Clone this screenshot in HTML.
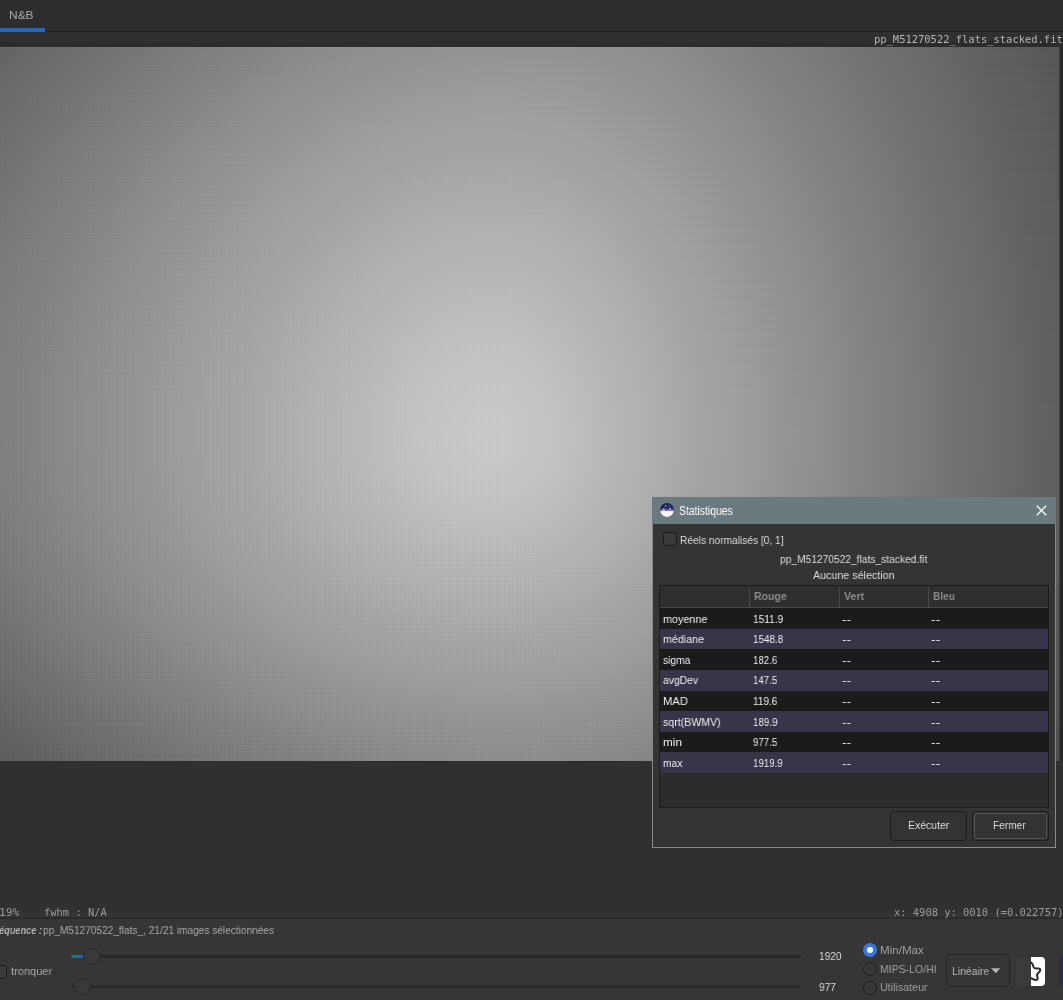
<!DOCTYPE html>
<html lang="fr">
<head>
<meta charset="utf-8">
<title>Statistiques</title>
<style>
*{box-sizing:border-box;margin:0;padding:0}
html,body{width:1063px;height:1000px;overflow:hidden;background:#2e2e2e}
body{position:relative;font-family:"Liberation Sans",sans-serif;font-size:12px;color:#d0d0d0}
.abs{position:absolute}
.t{position:absolute;white-space:nowrap;line-height:1;will-change:transform}
.mono{font-family:"DejaVu Sans Mono","Liberation Mono",monospace}
#topbar{left:0;top:0;width:1063px;height:31px;background:#2d2d2d}
#tabline{left:0;top:31px;width:1063px;height:1px;background:#1f1f1f}
#tabsel{left:0;top:28px;width:45px;height:4px;background:#2566b8}
#band{left:0;top:32px;width:1063px;height:15px;background:linear-gradient(#303030 9px,#2c2c2c 11px)}
#img{left:0;top:47px;width:1063px;height:714px;background:#999;overflow:hidden}
.s{position:absolute;left:0;width:1063px}
#imgT{left:0;top:47px;width:1060px;height:714px;background:repeating-linear-gradient(90deg,rgba(0,0,0,.014) 0 1px,rgba(255,255,255,.014) 1px 2px),repeating-linear-gradient(0deg,rgba(0,0,0,.014) 0 1px,rgba(255,255,255,.014) 1px 2px)}
#imgR{left:1059px;top:47px;width:4px;height:714px;background:linear-gradient(90deg,rgba(38,38,38,.3),#282828 1.5px,#242424 4px)}
#below{left:0;top:761px;width:1063px;height:158px;background:linear-gradient(#303030 151px,#353535 153px,#353535 156px,#2a2a2a 157px)}
#sepline{left:0;top:918px;width:1063px;height:1px;background:#282828}
#bottom{left:0;top:919px;width:1063px;height:81px;background:#363636}
#dlg{left:652px;top:497px;width:404px;height:351px;background:#343434;border:1px solid #8a8a8a;border-top:none}
#dlgtitle{left:-1px;top:0;width:404px;height:27px;background:#6b7a7f}
.cb{position:absolute;width:14px;height:14px;border:1px solid #1b1b1b;border-radius:3px;background:#3a3a3a}
#tbl{left:6px;top:88px;width:390px;height:223px;background:#2c2c2c;border:1px solid #1c1c1c}
#thead{left:0;top:0;width:388px;height:22px;background:#2f2f2f;border-bottom:1px solid #4a4a4a}
.vs{position:absolute;top:1px;width:1px;height:20px;background:#4a4a4a}
.row{position:absolute;left:0;width:388px}
.btn{position:absolute;height:30px;border:1px solid #1c1c1c;border-radius:4px;background:#333}
.track{position:absolute;height:3px;background:#292929;border-radius:2px}
.knob{position:absolute;width:17px;height:17px;border-radius:50%;background:#393939;border:1px solid #272727}
.radio{position:absolute;width:14px;height:14px;border-radius:50%;background:#383838;border:1px solid #1e1e1e}
</style>
</head>
<body>
<div id="topbar" class="abs"></div>
<div id="tabline" class="abs"></div>
<div id="tabsel" class="abs"></div>
<div id="band" class="abs"></div>
<div id="img" class="abs">
<div class="s" style="top:0px;height:7px;background:linear-gradient(90deg,#636363 0px,#676767 28px,#6b6b6b 56px,#6f6f6f 84px,#737373 112px,#767676 140px,#7a7a7a 168px,#7d7d7d 196px,#818181 224px,#848484 252px,#878787 280px,#8a8a8a 308px,#8c8c8c 336px,#8e8e8e 364px,#909090 392px,#929292 420px,#939393 448px,#949494 476px,#949494 504px,#949494 532px,#939393 560px,#929292 588px,#909090 616px,#8e8e8e 644px,#8b8b8b 672px,#888888 700px,#858585 728px,#818181 756px,#7d7d7d 784px,#7a7a7a 812px,#767676 840px,#727272 868px,#6d6d6d 896px,#696969 924px,#656565 952px,#616161 980px,#5c5c5c 1008px,#585858 1036px,#535353 1063px)"></div>
<div class="s" style="top:7px;height:7px;background:linear-gradient(90deg,#646464 0px,#686868 28px,#6c6c6c 56px,#707070 84px,#747474 112px,#777777 140px,#7b7b7b 168px,#7f7f7f 196px,#828282 224px,#858585 252px,#888888 280px,#8b8b8b 308px,#8d8d8d 336px,#909090 364px,#929292 392px,#939393 420px,#949494 448px,#959595 476px,#959595 504px,#959595 532px,#949494 560px,#939393 588px,#919191 616px,#8f8f8f 644px,#8c8c8c 672px,#898989 700px,#868686 728px,#828282 756px,#7e7e7e 784px,#7a7a7a 812px,#767676 840px,#727272 868px,#6e6e6e 896px,#6a6a6a 924px,#656565 952px,#616161 980px,#5d5d5d 1008px,#585858 1036px,#545454 1063px)"></div>
<div class="s" style="top:14px;height:7px;background:linear-gradient(90deg,#656565 0px,#696969 28px,#6d6d6d 56px,#717171 84px,#757575 112px,#787878 140px,#7c7c7c 168px,#808080 196px,#838383 224px,#868686 252px,#898989 280px,#8c8c8c 308px,#8f8f8f 336px,#919191 364px,#939393 392px,#949494 420px,#969696 448px,#969696 476px,#979797 504px,#969696 532px,#959595 560px,#949494 588px,#929292 616px,#909090 644px,#8d8d8d 672px,#8a8a8a 700px,#868686 728px,#838383 756px,#7f7f7f 784px,#7b7b7b 812px,#777777 840px,#737373 868px,#6f6f6f 896px,#6a6a6a 924px,#666666 952px,#616161 980px,#5d5d5d 1008px,#585858 1036px,#545454 1063px)"></div>
<div class="s" style="top:21px;height:7px;background:linear-gradient(90deg,#666666 0px,#6a6a6a 28px,#6e6e6e 56px,#727272 84px,#767676 112px,#797979 140px,#7d7d7d 168px,#818181 196px,#848484 224px,#878787 252px,#8a8a8a 280px,#8d8d8d 308px,#909090 336px,#929292 364px,#949494 392px,#969696 420px,#979797 448px,#989898 476px,#989898 504px,#989898 532px,#979797 560px,#959595 588px,#939393 616px,#919191 644px,#8e8e8e 672px,#8b8b8b 700px,#878787 728px,#848484 756px,#808080 784px,#7c7c7c 812px,#787878 840px,#737373 868px,#6f6f6f 896px,#6b6b6b 924px,#666666 952px,#626262 980px,#5d5d5d 1008px,#595959 1036px,#545454 1063px)"></div>
<div class="s" style="top:28px;height:7px;background:linear-gradient(90deg,#676767 0px,#6b6b6b 28px,#6f6f6f 56px,#737373 84px,#777777 112px,#7a7a7a 140px,#7e7e7e 168px,#828282 196px,#858585 224px,#898989 252px,#8c8c8c 280px,#8e8e8e 308px,#919191 336px,#939393 364px,#959595 392px,#979797 420px,#989898 448px,#999999 476px,#999999 504px,#999999 532px,#989898 560px,#969696 588px,#949494 616px,#929292 644px,#8f8f8f 672px,#8c8c8c 700px,#888888 728px,#848484 756px,#808080 784px,#7c7c7c 812px,#787878 840px,#747474 868px,#707070 896px,#6b6b6b 924px,#676767 952px,#626262 980px,#5e5e5e 1008px,#595959 1036px,#555555 1063px)"></div>
<div class="s" style="top:35px;height:7px;background:linear-gradient(90deg,#686868 0px,#6c6c6c 28px,#707070 56px,#747474 84px,#787878 112px,#7b7b7b 140px,#7f7f7f 168px,#838383 196px,#868686 224px,#8a8a8a 252px,#8d8d8d 280px,#909090 308px,#929292 336px,#959595 364px,#969696 392px,#989898 420px,#999999 448px,#9a9a9a 476px,#9a9a9a 504px,#9a9a9a 532px,#999999 560px,#979797 588px,#959595 616px,#939393 644px,#909090 672px,#8c8c8c 700px,#898989 728px,#858585 756px,#818181 784px,#7d7d7d 812px,#797979 840px,#757575 868px,#707070 896px,#6c6c6c 924px,#676767 952px,#636363 980px,#5e5e5e 1008px,#5a5a5a 1036px,#555555 1063px)"></div>
<div class="s" style="top:42px;height:7px;background:linear-gradient(90deg,#696969 0px,#6d6d6d 28px,#717171 56px,#757575 84px,#797979 112px,#7c7c7c 140px,#808080 168px,#848484 196px,#878787 224px,#8b8b8b 252px,#8e8e8e 280px,#919191 308px,#939393 336px,#969696 364px,#989898 392px,#999999 420px,#9b9b9b 448px,#9b9b9b 476px,#9c9c9c 504px,#9b9b9b 532px,#9a9a9a 560px,#999999 588px,#969696 616px,#949494 644px,#919191 672px,#8d8d8d 700px,#8a8a8a 728px,#868686 756px,#828282 784px,#7e7e7e 812px,#797979 840px,#757575 868px,#717171 896px,#6c6c6c 924px,#686868 952px,#636363 980px,#5e5e5e 1008px,#5a5a5a 1036px,#555555 1063px)"></div>
<div class="s" style="top:49px;height:7px;background:linear-gradient(90deg,#696969 0px,#6e6e6e 28px,#727272 56px,#767676 84px,#7a7a7a 112px,#7d7d7d 140px,#818181 168px,#858585 196px,#888888 224px,#8c8c8c 252px,#8f8f8f 280px,#929292 308px,#959595 336px,#979797 364px,#999999 392px,#9b9b9b 420px,#9c9c9c 448px,#9d9d9d 476px,#9d9d9d 504px,#9c9c9c 532px,#9b9b9b 560px,#9a9a9a 588px,#979797 616px,#959595 644px,#929292 672px,#8e8e8e 700px,#8b8b8b 728px,#878787 756px,#838383 784px,#7e7e7e 812px,#7a7a7a 840px,#767676 868px,#717171 896px,#6d6d6d 924px,#686868 952px,#636363 980px,#5f5f5f 1008px,#5a5a5a 1036px,#565656 1063px)"></div>
<div class="s" style="top:56px;height:7px;background:linear-gradient(90deg,#6a6a6a 0px,#6e6e6e 28px,#737373 56px,#777777 84px,#7b7b7b 112px,#7e7e7e 140px,#828282 168px,#868686 196px,#898989 224px,#8d8d8d 252px,#909090 280px,#939393 308px,#969696 336px,#989898 364px,#9a9a9a 392px,#9c9c9c 420px,#9d9d9d 448px,#9e9e9e 476px,#9e9e9e 504px,#9d9d9d 532px,#9c9c9c 560px,#9b9b9b 588px,#989898 616px,#969696 644px,#939393 672px,#8f8f8f 700px,#8b8b8b 728px,#878787 756px,#838383 784px,#7f7f7f 812px,#7b7b7b 840px,#767676 868px,#727272 896px,#6d6d6d 924px,#696969 952px,#646464 980px,#5f5f5f 1008px,#5b5b5b 1036px,#565656 1063px)"></div>
<div class="s" style="top:63px;height:7px;background:linear-gradient(90deg,#6b6b6b 0px,#6f6f6f 28px,#737373 56px,#777777 84px,#7b7b7b 112px,#7f7f7f 140px,#838383 168px,#878787 196px,#8a8a8a 224px,#8e8e8e 252px,#919191 280px,#949494 308px,#979797 336px,#999999 364px,#9b9b9b 392px,#9d9d9d 420px,#9e9e9e 448px,#9f9f9f 476px,#9f9f9f 504px,#9f9f9f 532px,#9e9e9e 560px,#9c9c9c 588px,#999999 616px,#979797 644px,#939393 672px,#909090 700px,#8c8c8c 728px,#888888 756px,#848484 784px,#808080 812px,#7b7b7b 840px,#777777 868px,#727272 896px,#6e6e6e 924px,#696969 952px,#646464 980px,#606060 1008px,#5b5b5b 1036px,#565656 1063px)"></div>
<div class="s" style="top:70px;height:7px;background:linear-gradient(90deg,#6c6c6c 0px,#707070 28px,#747474 56px,#787878 84px,#7c7c7c 112px,#808080 140px,#848484 168px,#888888 196px,#8b8b8b 224px,#8f8f8f 252px,#929292 280px,#959595 308px,#989898 336px,#9a9a9a 364px,#9c9c9c 392px,#9e9e9e 420px,#9f9f9f 448px,#a0a0a0 476px,#a0a0a0 504px,#a0a0a0 532px,#9f9f9f 560px,#9d9d9d 588px,#9a9a9a 616px,#989898 644px,#949494 672px,#919191 700px,#8d8d8d 728px,#898989 756px,#858585 784px,#808080 812px,#7c7c7c 840px,#777777 868px,#737373 896px,#6e6e6e 924px,#696969 952px,#656565 980px,#606060 1008px,#5b5b5b 1036px,#575757 1063px)"></div>
<div class="s" style="top:77px;height:7px;background:linear-gradient(90deg,#6d6d6d 0px,#717171 28px,#757575 56px,#797979 84px,#7d7d7d 112px,#818181 140px,#858585 168px,#898989 196px,#8c8c8c 224px,#909090 252px,#939393 280px,#969696 308px,#999999 336px,#9c9c9c 364px,#9e9e9e 392px,#9f9f9f 420px,#a1a1a1 448px,#a1a1a1 476px,#a2a2a2 504px,#a1a1a1 532px,#a0a0a0 560px,#9e9e9e 588px,#9b9b9b 616px,#999999 644px,#959595 672px,#929292 700px,#8e8e8e 728px,#8a8a8a 756px,#858585 784px,#818181 812px,#7c7c7c 840px,#787878 868px,#737373 896px,#6f6f6f 924px,#6a6a6a 952px,#656565 980px,#606060 1008px,#5b5b5b 1036px,#575757 1063px)"></div>
<div class="s" style="top:84px;height:7px;background:linear-gradient(90deg,#6e6e6e 0px,#727272 28px,#767676 56px,#7a7a7a 84px,#7e7e7e 112px,#828282 140px,#868686 168px,#8a8a8a 196px,#8d8d8d 224px,#919191 252px,#949494 280px,#979797 308px,#9a9a9a 336px,#9d9d9d 364px,#9f9f9f 392px,#a1a1a1 420px,#a2a2a2 448px,#a3a3a3 476px,#a3a3a3 504px,#a2a2a2 532px,#a1a1a1 560px,#9f9f9f 588px,#9c9c9c 616px,#999999 644px,#969696 672px,#929292 700px,#8e8e8e 728px,#8a8a8a 756px,#868686 784px,#828282 812px,#7d7d7d 840px,#787878 868px,#747474 896px,#6f6f6f 924px,#6a6a6a 952px,#656565 980px,#616161 1008px,#5c5c5c 1036px,#575757 1063px)"></div>
<div class="s" style="top:91px;height:7px;background:linear-gradient(90deg,#6e6e6e 0px,#737373 28px,#777777 56px,#7b7b7b 84px,#7f7f7f 112px,#838383 140px,#878787 168px,#8b8b8b 196px,#8e8e8e 224px,#929292 252px,#959595 280px,#989898 308px,#9b9b9b 336px,#9e9e9e 364px,#a0a0a0 392px,#a2a2a2 420px,#a3a3a3 448px,#a4a4a4 476px,#a4a4a4 504px,#a3a3a3 532px,#a2a2a2 560px,#a0a0a0 588px,#9d9d9d 616px,#9a9a9a 644px,#979797 672px,#939393 700px,#8f8f8f 728px,#8b8b8b 756px,#878787 784px,#828282 812px,#7e7e7e 840px,#797979 868px,#747474 896px,#6f6f6f 924px,#6b6b6b 952px,#666666 980px,#616161 1008px,#5c5c5c 1036px,#575757 1063px)"></div>
<div class="s" style="top:98px;height:7px;background:linear-gradient(90deg,#6f6f6f 0px,#737373 28px,#787878 56px,#7c7c7c 84px,#808080 112px,#848484 140px,#888888 168px,#8c8c8c 196px,#8f8f8f 224px,#939393 252px,#969696 280px,#999999 308px,#9c9c9c 336px,#9f9f9f 364px,#a1a1a1 392px,#a3a3a3 420px,#a4a4a4 448px,#a5a5a5 476px,#a5a5a5 504px,#a4a4a4 532px,#a3a3a3 560px,#a1a1a1 588px,#9e9e9e 616px,#9b9b9b 644px,#989898 672px,#949494 700px,#909090 728px,#8c8c8c 756px,#878787 784px,#838383 812px,#7e7e7e 840px,#797979 868px,#757575 896px,#707070 924px,#6b6b6b 952px,#666666 980px,#616161 1008px,#5c5c5c 1036px,#585858 1063px)"></div>
<div class="s" style="top:105px;height:7px;background:linear-gradient(90deg,#707070 0px,#747474 28px,#787878 56px,#7d7d7d 84px,#818181 112px,#858585 140px,#898989 168px,#8d8d8d 196px,#909090 224px,#949494 252px,#979797 280px,#9a9a9a 308px,#9d9d9d 336px,#a0a0a0 364px,#a2a2a2 392px,#a4a4a4 420px,#a5a5a5 448px,#a6a6a6 476px,#a6a6a6 504px,#a6a6a6 532px,#a4a4a4 560px,#a2a2a2 588px,#9f9f9f 616px,#9c9c9c 644px,#999999 672px,#959595 700px,#919191 728px,#8c8c8c 756px,#888888 784px,#838383 812px,#7f7f7f 840px,#7a7a7a 868px,#757575 896px,#707070 924px,#6b6b6b 952px,#666666 980px,#626262 1008px,#5d5d5d 1036px,#585858 1063px)"></div>
<div class="s" style="top:112px;height:7px;background:linear-gradient(90deg,#717171 0px,#757575 28px,#797979 56px,#7d7d7d 84px,#818181 112px,#868686 140px,#8a8a8a 168px,#8d8d8d 196px,#919191 224px,#959595 252px,#989898 280px,#9b9b9b 308px,#9e9e9e 336px,#a1a1a1 364px,#a3a3a3 392px,#a5a5a5 420px,#a7a7a7 448px,#a7a7a7 476px,#a7a7a7 504px,#a7a7a7 532px,#a5a5a5 560px,#a3a3a3 588px,#a0a0a0 616px,#9d9d9d 644px,#9a9a9a 672px,#969696 700px,#919191 728px,#8d8d8d 756px,#888888 784px,#848484 812px,#7f7f7f 840px,#7a7a7a 868px,#767676 896px,#717171 924px,#6c6c6c 952px,#676767 980px,#626262 1008px,#5d5d5d 1036px,#585858 1063px)"></div>
<div class="s" style="top:119px;height:7px;background:linear-gradient(90deg,#717171 0px,#767676 28px,#7a7a7a 56px,#7e7e7e 84px,#828282 112px,#868686 140px,#8a8a8a 168px,#8e8e8e 196px,#929292 224px,#969696 252px,#999999 280px,#9d9d9d 308px,#9f9f9f 336px,#a2a2a2 364px,#a4a4a4 392px,#a6a6a6 420px,#a8a8a8 448px,#a8a8a8 476px,#a9a9a9 504px,#a8a8a8 532px,#a6a6a6 560px,#a4a4a4 588px,#a1a1a1 616px,#9e9e9e 644px,#9a9a9a 672px,#969696 700px,#929292 728px,#8e8e8e 756px,#898989 784px,#848484 812px,#808080 840px,#7b7b7b 868px,#767676 896px,#717171 924px,#6c6c6c 952px,#676767 980px,#626262 1008px,#5d5d5d 1036px,#585858 1063px)"></div>
<div class="s" style="top:126px;height:7px;background:linear-gradient(90deg,#727272 0px,#767676 28px,#7b7b7b 56px,#7f7f7f 84px,#838383 112px,#878787 140px,#8b8b8b 168px,#8f8f8f 196px,#939393 224px,#979797 252px,#9a9a9a 280px,#9d9d9d 308px,#a1a1a1 336px,#a3a3a3 364px,#a6a6a6 392px,#a7a7a7 420px,#a9a9a9 448px,#aaaaaa 476px,#aaaaaa 504px,#a9a9a9 532px,#a7a7a7 560px,#a5a5a5 588px,#a2a2a2 616px,#9f9f9f 644px,#9b9b9b 672px,#979797 700px,#939393 728px,#8e8e8e 756px,#8a8a8a 784px,#858585 812px,#808080 840px,#7b7b7b 868px,#767676 896px,#717171 924px,#6c6c6c 952px,#676767 980px,#636363 1008px,#5e5e5e 1036px,#595959 1063px)"></div>
<div class="s" style="top:133px;height:7px;background:linear-gradient(90deg,#737373 0px,#777777 28px,#7b7b7b 56px,#808080 84px,#848484 112px,#888888 140px,#8c8c8c 168px,#909090 196px,#949494 224px,#989898 252px,#9b9b9b 280px,#9e9e9e 308px,#a2a2a2 336px,#a4a4a4 364px,#a7a7a7 392px,#a9a9a9 420px,#aaaaaa 448px,#ababab 476px,#ababab 504px,#aaaaaa 532px,#a9a9a9 560px,#a6a6a6 588px,#a3a3a3 616px,#a0a0a0 644px,#9c9c9c 672px,#989898 700px,#939393 728px,#8f8f8f 756px,#8a8a8a 784px,#858585 812px,#818181 840px,#7c7c7c 868px,#777777 896px,#727272 924px,#6d6d6d 952px,#686868 980px,#636363 1008px,#5e5e5e 1036px,#595959 1063px)"></div>
<div class="s" style="top:140px;height:7px;background:linear-gradient(90deg,#737373 0px,#787878 28px,#7c7c7c 56px,#808080 84px,#848484 112px,#898989 140px,#8d8d8d 168px,#919191 196px,#959595 224px,#989898 252px,#9c9c9c 280px,#9f9f9f 308px,#a3a3a3 336px,#a5a5a5 364px,#a8a8a8 392px,#aaaaaa 420px,#ababab 448px,#acacac 476px,#acacac 504px,#ababab 532px,#aaaaaa 560px,#a7a7a7 588px,#a4a4a4 616px,#a1a1a1 644px,#9d9d9d 672px,#999999 700px,#949494 728px,#909090 756px,#8b8b8b 784px,#868686 812px,#818181 840px,#7c7c7c 868px,#777777 896px,#727272 924px,#6d6d6d 952px,#686868 980px,#636363 1008px,#5e5e5e 1036px,#595959 1063px)"></div>
<div class="s" style="top:147px;height:7px;background:linear-gradient(90deg,#747474 0px,#787878 28px,#7d7d7d 56px,#818181 84px,#858585 112px,#898989 140px,#8e8e8e 168px,#929292 196px,#959595 224px,#999999 252px,#9d9d9d 280px,#a0a0a0 308px,#a4a4a4 336px,#a6a6a6 364px,#a9a9a9 392px,#ababab 420px,#acacac 448px,#adadad 476px,#adadad 504px,#acacac 532px,#ababab 560px,#a8a8a8 588px,#a5a5a5 616px,#a1a1a1 644px,#9e9e9e 672px,#999999 700px,#959595 728px,#909090 756px,#8b8b8b 784px,#878787 812px,#828282 840px,#7d7d7d 868px,#787878 896px,#737373 924px,#6e6e6e 952px,#686868 980px,#636363 1008px,#5e5e5e 1036px,#595959 1063px)"></div>
<div class="s" style="top:154px;height:7px;background:linear-gradient(90deg,#757575 0px,#797979 28px,#7d7d7d 56px,#828282 84px,#868686 112px,#8a8a8a 140px,#8e8e8e 168px,#929292 196px,#969696 224px,#9a9a9a 252px,#9e9e9e 280px,#a1a1a1 308px,#a4a4a4 336px,#a7a7a7 364px,#aaaaaa 392px,#acacac 420px,#adadad 448px,#aeaeae 476px,#aeaeae 504px,#adadad 532px,#acacac 560px,#a9a9a9 588px,#a6a6a6 616px,#a2a2a2 644px,#9e9e9e 672px,#9a9a9a 700px,#959595 728px,#919191 756px,#8c8c8c 784px,#878787 812px,#828282 840px,#7d7d7d 868px,#787878 896px,#737373 924px,#6e6e6e 952px,#696969 980px,#646464 1008px,#5f5f5f 1036px,#5a5a5a 1063px)"></div>
<div class="s" style="top:161px;height:7px;background:linear-gradient(90deg,#757575 0px,#7a7a7a 28px,#7e7e7e 56px,#828282 84px,#878787 112px,#8b8b8b 140px,#8f8f8f 168px,#939393 196px,#979797 224px,#9b9b9b 252px,#9f9f9f 280px,#a2a2a2 308px,#a5a5a5 336px,#a8a8a8 364px,#ababab 392px,#adadad 420px,#afafaf 448px,#afafaf 476px,#afafaf 504px,#aeaeae 532px,#adadad 560px,#aaaaaa 588px,#a7a7a7 616px,#a3a3a3 644px,#9f9f9f 672px,#9b9b9b 700px,#969696 728px,#919191 756px,#8c8c8c 784px,#878787 812px,#828282 840px,#7d7d7d 868px,#787878 896px,#737373 924px,#6e6e6e 952px,#696969 980px,#646464 1008px,#5f5f5f 1036px,#5a5a5a 1063px)"></div>
<div class="s" style="top:168px;height:7px;background:linear-gradient(90deg,#767676 0px,#7a7a7a 28px,#7f7f7f 56px,#838383 84px,#878787 112px,#8b8b8b 140px,#909090 168px,#949494 196px,#989898 224px,#9c9c9c 252px,#a0a0a0 280px,#a3a3a3 308px,#a6a6a6 336px,#a9a9a9 364px,#acacac 392px,#aeaeae 420px,#b0b0b0 448px,#b0b0b0 476px,#b0b0b0 504px,#b0b0b0 532px,#aeaeae 560px,#ababab 588px,#a8a8a8 616px,#a4a4a4 644px,#a0a0a0 672px,#9b9b9b 700px,#979797 728px,#929292 756px,#8d8d8d 784px,#888888 812px,#838383 840px,#7e7e7e 868px,#797979 896px,#747474 924px,#6e6e6e 952px,#696969 980px,#646464 1008px,#5f5f5f 1036px,#5a5a5a 1063px)"></div>
<div class="s" style="top:175px;height:7px;background:linear-gradient(90deg,#767676 0px,#7b7b7b 28px,#7f7f7f 56px,#848484 84px,#888888 112px,#8c8c8c 140px,#909090 168px,#959595 196px,#999999 224px,#9d9d9d 252px,#a0a0a0 280px,#a4a4a4 308px,#a7a7a7 336px,#aaaaaa 364px,#adadad 392px,#afafaf 420px,#b1b1b1 448px,#b2b2b2 476px,#b2b2b2 504px,#b1b1b1 532px,#afafaf 560px,#acacac 588px,#a9a9a9 616px,#a5a5a5 644px,#a0a0a0 672px,#9c9c9c 700px,#979797 728px,#929292 756px,#8d8d8d 784px,#888888 812px,#838383 840px,#7e7e7e 868px,#797979 896px,#747474 924px,#6f6f6f 952px,#6a6a6a 980px,#646464 1008px,#5f5f5f 1036px,#5a5a5a 1063px)"></div>
<div class="s" style="top:182px;height:7px;background:linear-gradient(90deg,#777777 0px,#7b7b7b 28px,#808080 56px,#848484 84px,#888888 112px,#8d8d8d 140px,#919191 168px,#959595 196px,#999999 224px,#9d9d9d 252px,#a1a1a1 280px,#a5a5a5 308px,#a8a8a8 336px,#ababab 364px,#aeaeae 392px,#b0b0b0 420px,#b2b2b2 448px,#b3b3b3 476px,#b3b3b3 504px,#b2b2b2 532px,#b0b0b0 560px,#adadad 588px,#a9a9a9 616px,#a5a5a5 644px,#a1a1a1 672px,#9d9d9d 700px,#989898 728px,#939393 756px,#8e8e8e 784px,#898989 812px,#848484 840px,#7f7f7f 868px,#797979 896px,#747474 924px,#6f6f6f 952px,#6a6a6a 980px,#656565 1008px,#5f5f5f 1036px,#5a5a5a 1063px)"></div>
<div class="s" style="top:189px;height:7px;background:linear-gradient(90deg,#787878 0px,#7c7c7c 28px,#808080 56px,#858585 84px,#898989 112px,#8d8d8d 140px,#929292 168px,#969696 196px,#9a9a9a 224px,#9e9e9e 252px,#a2a2a2 280px,#a6a6a6 308px,#a9a9a9 336px,#acacac 364px,#afafaf 392px,#b1b1b1 420px,#b3b3b3 448px,#b4b4b4 476px,#b4b4b4 504px,#b3b3b3 532px,#b1b1b1 560px,#aeaeae 588px,#aaaaaa 616px,#a6a6a6 644px,#a2a2a2 672px,#9d9d9d 700px,#989898 728px,#939393 756px,#8e8e8e 784px,#898989 812px,#848484 840px,#7f7f7f 868px,#7a7a7a 896px,#757575 924px,#6f6f6f 952px,#6a6a6a 980px,#656565 1008px,#606060 1036px,#5b5b5b 1063px)"></div>
<div class="s" style="top:196px;height:7px;background:linear-gradient(90deg,#787878 0px,#7d7d7d 28px,#818181 56px,#858585 84px,#8a8a8a 112px,#8e8e8e 140px,#929292 168px,#979797 196px,#9b9b9b 224px,#9f9f9f 252px,#a3a3a3 280px,#a6a6a6 308px,#aaaaaa 336px,#adadad 364px,#b0b0b0 392px,#b2b2b2 420px,#b4b4b4 448px,#b5b5b5 476px,#b5b5b5 504px,#b4b4b4 532px,#b2b2b2 560px,#afafaf 588px,#ababab 616px,#a7a7a7 644px,#a3a3a3 672px,#9e9e9e 700px,#999999 728px,#949494 756px,#8f8f8f 784px,#8a8a8a 812px,#858585 840px,#7f7f7f 868px,#7a7a7a 896px,#757575 924px,#707070 952px,#6a6a6a 980px,#656565 1008px,#606060 1036px,#5b5b5b 1063px)"></div>
<div class="s" style="top:203px;height:7px;background:linear-gradient(90deg,#797979 0px,#7d7d7d 28px,#818181 56px,#868686 84px,#8a8a8a 112px,#8f8f8f 140px,#939393 168px,#979797 196px,#9b9b9b 224px,#9f9f9f 252px,#a3a3a3 280px,#a7a7a7 308px,#ababab 336px,#aeaeae 364px,#b1b1b1 392px,#b3b3b3 420px,#b5b5b5 448px,#b6b6b6 476px,#b6b6b6 504px,#b5b5b5 532px,#b3b3b3 560px,#b0b0b0 588px,#acacac 616px,#a8a8a8 644px,#a3a3a3 672px,#9e9e9e 700px,#999999 728px,#949494 756px,#8f8f8f 784px,#8a8a8a 812px,#858585 840px,#808080 868px,#7a7a7a 896px,#757575 924px,#707070 952px,#6b6b6b 980px,#656565 1008px,#606060 1036px,#5b5b5b 1063px)"></div>
<div class="s" style="top:210px;height:7px;background:linear-gradient(90deg,#797979 0px,#7e7e7e 28px,#828282 56px,#868686 84px,#8b8b8b 112px,#8f8f8f 140px,#949494 168px,#989898 196px,#9c9c9c 224px,#a0a0a0 252px,#a4a4a4 280px,#a8a8a8 308px,#acacac 336px,#afafaf 364px,#b2b2b2 392px,#b4b4b4 420px,#b6b6b6 448px,#b7b7b7 476px,#b7b7b7 504px,#b6b6b6 532px,#b4b4b4 560px,#b0b0b0 588px,#adadad 616px,#a8a8a8 644px,#a4a4a4 672px,#9f9f9f 700px,#9a9a9a 728px,#959595 756px,#909090 784px,#8b8b8b 812px,#858585 840px,#808080 868px,#7b7b7b 896px,#757575 924px,#707070 952px,#6b6b6b 980px,#666666 1008px,#606060 1036px,#5b5b5b 1063px)"></div>
<div class="s" style="top:217px;height:7px;background:linear-gradient(90deg,#7a7a7a 0px,#7e7e7e 28px,#828282 56px,#878787 84px,#8b8b8b 112px,#909090 140px,#949494 168px,#989898 196px,#9d9d9d 224px,#a1a1a1 252px,#a5a5a5 280px,#a9a9a9 308px,#acacac 336px,#b0b0b0 364px,#b3b3b3 392px,#b5b5b5 420px,#b7b7b7 448px,#b8b8b8 476px,#b8b8b8 504px,#b7b7b7 532px,#b4b4b4 560px,#b1b1b1 588px,#adadad 616px,#a9a9a9 644px,#a4a4a4 672px,#a0a0a0 700px,#9a9a9a 728px,#959595 756px,#909090 784px,#8b8b8b 812px,#868686 840px,#808080 868px,#7b7b7b 896px,#767676 924px,#707070 952px,#6b6b6b 980px,#666666 1008px,#606060 1036px,#5b5b5b 1063px)"></div>
<div class="s" style="top:224px;height:7px;background:linear-gradient(90deg,#7a7a7a 0px,#7e7e7e 28px,#838383 56px,#878787 84px,#8c8c8c 112px,#909090 140px,#959595 168px,#999999 196px,#9d9d9d 224px,#a1a1a1 252px,#a6a6a6 280px,#a9a9a9 308px,#adadad 336px,#b1b1b1 364px,#b4b4b4 392px,#b6b6b6 420px,#b8b8b8 448px,#b9b9b9 476px,#b9b9b9 504px,#b8b8b8 532px,#b5b5b5 560px,#b2b2b2 588px,#aeaeae 616px,#aaaaaa 644px,#a5a5a5 672px,#a0a0a0 700px,#9b9b9b 728px,#969696 756px,#919191 784px,#8b8b8b 812px,#868686 840px,#818181 868px,#7b7b7b 896px,#767676 924px,#717171 952px,#6b6b6b 980px,#666666 1008px,#616161 1036px,#5b5b5b 1063px)"></div>
<div class="s" style="top:231px;height:7px;background:linear-gradient(90deg,#7a7a7a 0px,#7f7f7f 28px,#838383 56px,#888888 84px,#8c8c8c 112px,#919191 140px,#959595 168px,#9a9a9a 196px,#9e9e9e 224px,#a2a2a2 252px,#a6a6a6 280px,#aaaaaa 308px,#aeaeae 336px,#b1b1b1 364px,#b5b5b5 392px,#b7b7b7 420px,#b9b9b9 448px,#bababa 476px,#bababa 504px,#b9b9b9 532px,#b6b6b6 560px,#b3b3b3 588px,#afafaf 616px,#aaaaaa 644px,#a6a6a6 672px,#a1a1a1 700px,#9b9b9b 728px,#969696 756px,#919191 784px,#8c8c8c 812px,#868686 840px,#818181 868px,#7c7c7c 896px,#767676 924px,#717171 952px,#6b6b6b 980px,#666666 1008px,#616161 1036px,#5c5c5c 1063px)"></div>
<div class="s" style="top:238px;height:7px;background:linear-gradient(90deg,#7b7b7b 0px,#7f7f7f 28px,#848484 56px,#888888 84px,#8d8d8d 112px,#919191 140px,#969696 168px,#9a9a9a 196px,#9e9e9e 224px,#a3a3a3 252px,#a7a7a7 280px,#ababab 308px,#afafaf 336px,#b2b2b2 364px,#b5b5b5 392px,#b8b8b8 420px,#bababa 448px,#bbbbbb 476px,#bbbbbb 504px,#bababa 532px,#b7b7b7 560px,#b4b4b4 588px,#b0b0b0 616px,#ababab 644px,#a6a6a6 672px,#a1a1a1 700px,#9c9c9c 728px,#979797 756px,#919191 784px,#8c8c8c 812px,#878787 840px,#818181 868px,#7c7c7c 896px,#767676 924px,#717171 952px,#6c6c6c 980px,#666666 1008px,#616161 1036px,#5c5c5c 1063px)"></div>
<div class="s" style="top:245px;height:7px;background:linear-gradient(90deg,#7b7b7b 0px,#808080 28px,#848484 56px,#898989 84px,#8d8d8d 112px,#929292 140px,#969696 168px,#9b9b9b 196px,#9f9f9f 224px,#a3a3a3 252px,#a7a7a7 280px,#acacac 308px,#afafaf 336px,#b3b3b3 364px,#b6b6b6 392px,#b9b9b9 420px,#bbbbbb 448px,#bcbcbc 476px,#bcbcbc 504px,#bbbbbb 532px,#b8b8b8 560px,#b4b4b4 588px,#b0b0b0 616px,#acacac 644px,#a7a7a7 672px,#a2a2a2 700px,#9c9c9c 728px,#979797 756px,#929292 784px,#8c8c8c 812px,#878787 840px,#828282 868px,#7c7c7c 896px,#777777 924px,#717171 952px,#6c6c6c 980px,#666666 1008px,#616161 1036px,#5c5c5c 1063px)"></div>
<div class="s" style="top:252px;height:7px;background:linear-gradient(90deg,#7c7c7c 0px,#808080 28px,#858585 56px,#898989 84px,#8e8e8e 112px,#929292 140px,#979797 168px,#9b9b9b 196px,#9f9f9f 224px,#a4a4a4 252px,#a8a8a8 280px,#acacac 308px,#b0b0b0 336px,#b4b4b4 364px,#b7b7b7 392px,#bababa 420px,#bcbcbc 448px,#bdbdbd 476px,#bdbdbd 504px,#bcbcbc 532px,#b9b9b9 560px,#b5b5b5 588px,#b1b1b1 616px,#acacac 644px,#a7a7a7 672px,#a2a2a2 700px,#9d9d9d 728px,#979797 756px,#929292 784px,#8d8d8d 812px,#878787 840px,#828282 868px,#7c7c7c 896px,#777777 924px,#717171 952px,#6c6c6c 980px,#676767 1008px,#616161 1036px,#5c5c5c 1063px)"></div>
<div class="s" style="top:259px;height:7px;background:linear-gradient(90deg,#7c7c7c 0px,#808080 28px,#858585 56px,#898989 84px,#8e8e8e 112px,#939393 140px,#979797 168px,#9c9c9c 196px,#a0a0a0 224px,#a4a4a4 252px,#a9a9a9 280px,#adadad 308px,#b1b1b1 336px,#b4b4b4 364px,#b8b8b8 392px,#bbbbbb 420px,#bdbdbd 448px,#bebebe 476px,#bebebe 504px,#bcbcbc 532px,#bababa 560px,#b6b6b6 588px,#b2b2b2 616px,#adadad 644px,#a8a8a8 672px,#a2a2a2 700px,#9d9d9d 728px,#989898 756px,#929292 784px,#8d8d8d 812px,#878787 840px,#828282 868px,#7d7d7d 896px,#777777 924px,#727272 952px,#6c6c6c 980px,#676767 1008px,#616161 1036px,#5c5c5c 1063px)"></div>
<div class="s" style="top:266px;height:7px;background:linear-gradient(90deg,#7c7c7c 0px,#818181 28px,#858585 56px,#8a8a8a 84px,#8e8e8e 112px,#939393 140px,#979797 168px,#9c9c9c 196px,#a0a0a0 224px,#a5a5a5 252px,#a9a9a9 280px,#adadad 308px,#b1b1b1 336px,#b5b5b5 364px,#b9b9b9 392px,#bcbcbc 420px,#bebebe 448px,#bfbfbf 476px,#bfbfbf 504px,#bdbdbd 532px,#bababa 560px,#b7b7b7 588px,#b2b2b2 616px,#adadad 644px,#a8a8a8 672px,#a3a3a3 700px,#9e9e9e 728px,#989898 756px,#939393 784px,#8d8d8d 812px,#888888 840px,#828282 868px,#7d7d7d 896px,#777777 924px,#727272 952px,#6c6c6c 980px,#676767 1008px,#616161 1036px,#5c5c5c 1063px)"></div>
<div class="s" style="top:273px;height:7px;background:linear-gradient(90deg,#7d7d7d 0px,#818181 28px,#868686 56px,#8a8a8a 84px,#8f8f8f 112px,#939393 140px,#989898 168px,#9c9c9c 196px,#a1a1a1 224px,#a5a5a5 252px,#aaaaaa 280px,#aeaeae 308px,#b2b2b2 336px,#b6b6b6 364px,#b9b9b9 392px,#bcbcbc 420px,#bfbfbf 448px,#c0c0c0 476px,#c0c0c0 504px,#bebebe 532px,#bbbbbb 560px,#b7b7b7 588px,#b3b3b3 616px,#aeaeae 644px,#a9a9a9 672px,#a3a3a3 700px,#9e9e9e 728px,#989898 756px,#939393 784px,#8e8e8e 812px,#888888 840px,#828282 868px,#7d7d7d 896px,#787878 924px,#727272 952px,#6d6d6d 980px,#676767 1008px,#626262 1036px,#5c5c5c 1063px)"></div>
<div class="s" style="top:280px;height:7px;background:linear-gradient(90deg,#7d7d7d 0px,#818181 28px,#868686 56px,#8a8a8a 84px,#8f8f8f 112px,#949494 140px,#989898 168px,#9d9d9d 196px,#a1a1a1 224px,#a6a6a6 252px,#aaaaaa 280px,#aeaeae 308px,#b3b3b3 336px,#b7b7b7 364px,#bababa 392px,#bdbdbd 420px,#c0c0c0 448px,#c1c1c1 476px,#c1c1c1 504px,#bfbfbf 532px,#bcbcbc 560px,#b8b8b8 588px,#b3b3b3 616px,#aeaeae 644px,#a9a9a9 672px,#a4a4a4 700px,#9e9e9e 728px,#999999 756px,#939393 784px,#8e8e8e 812px,#888888 840px,#838383 868px,#7d7d7d 896px,#787878 924px,#727272 952px,#6d6d6d 980px,#676767 1008px,#626262 1036px,#5c5c5c 1063px)"></div>
<div class="s" style="top:287px;height:7px;background:linear-gradient(90deg,#7d7d7d 0px,#828282 28px,#868686 56px,#8b8b8b 84px,#8f8f8f 112px,#949494 140px,#999999 168px,#9d9d9d 196px,#a2a2a2 224px,#a6a6a6 252px,#ababab 280px,#afafaf 308px,#b3b3b3 336px,#b7b7b7 364px,#bbbbbb 392px,#bebebe 420px,#c1c1c1 448px,#c2c2c2 476px,#c2c2c2 504px,#c0c0c0 532px,#bdbdbd 560px,#b9b9b9 588px,#b4b4b4 616px,#afafaf 644px,#a9a9a9 672px,#a4a4a4 700px,#9f9f9f 728px,#999999 756px,#949494 784px,#8e8e8e 812px,#888888 840px,#838383 868px,#7d7d7d 896px,#787878 924px,#727272 952px,#6d6d6d 980px,#676767 1008px,#626262 1036px,#5d5d5d 1063px)"></div>
<div class="s" style="top:294px;height:7px;background:linear-gradient(90deg,#7d7d7d 0px,#828282 28px,#868686 56px,#8b8b8b 84px,#909090 112px,#949494 140px,#999999 168px,#9d9d9d 196px,#a2a2a2 224px,#a7a7a7 252px,#ababab 280px,#afafaf 308px,#b4b4b4 336px,#b8b8b8 364px,#bcbcbc 392px,#bfbfbf 420px,#c1c1c1 448px,#c3c3c3 476px,#c3c3c3 504px,#c1c1c1 532px,#bdbdbd 560px,#b9b9b9 588px,#b4b4b4 616px,#afafaf 644px,#aaaaaa 672px,#a4a4a4 700px,#9f9f9f 728px,#999999 756px,#949494 784px,#8e8e8e 812px,#898989 840px,#838383 868px,#7e7e7e 896px,#787878 924px,#727272 952px,#6d6d6d 980px,#676767 1008px,#626262 1036px,#5d5d5d 1063px)"></div>
<div class="s" style="top:301px;height:7px;background:linear-gradient(90deg,#7e7e7e 0px,#828282 28px,#878787 56px,#8b8b8b 84px,#909090 112px,#959595 140px,#999999 168px,#9e9e9e 196px,#a2a2a2 224px,#a7a7a7 252px,#ababab 280px,#b0b0b0 308px,#b4b4b4 336px,#b8b8b8 364px,#bcbcbc 392px,#c0c0c0 420px,#c2c2c2 448px,#c4c4c4 476px,#c4c4c4 504px,#c2c2c2 532px,#bebebe 560px,#bababa 588px,#b5b5b5 616px,#b0b0b0 644px,#aaaaaa 672px,#a5a5a5 700px,#9f9f9f 728px,#9a9a9a 756px,#949494 784px,#8e8e8e 812px,#898989 840px,#838383 868px,#7e7e7e 896px,#787878 924px,#737373 952px,#6d6d6d 980px,#686868 1008px,#626262 1036px,#5d5d5d 1063px)"></div>
<div class="s" style="top:308px;height:7px;background:linear-gradient(90deg,#7e7e7e 0px,#828282 28px,#878787 56px,#8c8c8c 84px,#909090 112px,#959595 140px,#999999 168px,#9e9e9e 196px,#a3a3a3 224px,#a7a7a7 252px,#acacac 280px,#b0b0b0 308px,#b5b5b5 336px,#b9b9b9 364px,#bdbdbd 392px,#c0c0c0 420px,#c3c3c3 448px,#c5c5c5 476px,#c4c4c4 504px,#c2c2c2 532px,#bfbfbf 560px,#bababa 588px,#b5b5b5 616px,#b0b0b0 644px,#ababab 672px,#a5a5a5 700px,#9f9f9f 728px,#9a9a9a 756px,#949494 784px,#8f8f8f 812px,#898989 840px,#838383 868px,#7e7e7e 896px,#787878 924px,#737373 952px,#6d6d6d 980px,#686868 1008px,#626262 1036px,#5d5d5d 1063px)"></div>
<div class="s" style="top:315px;height:7px;background:linear-gradient(90deg,#7e7e7e 0px,#838383 28px,#878787 56px,#8c8c8c 84px,#909090 112px,#959595 140px,#9a9a9a 168px,#9e9e9e 196px,#a3a3a3 224px,#a8a8a8 252px,#acacac 280px,#b1b1b1 308px,#b5b5b5 336px,#b9b9b9 364px,#bdbdbd 392px,#c1c1c1 420px,#c4c4c4 448px,#c5c5c5 476px,#c5c5c5 504px,#c3c3c3 532px,#bfbfbf 560px,#bbbbbb 588px,#b6b6b6 616px,#b0b0b0 644px,#ababab 672px,#a5a5a5 700px,#a0a0a0 728px,#9a9a9a 756px,#949494 784px,#8f8f8f 812px,#898989 840px,#848484 868px,#7e7e7e 896px,#787878 924px,#737373 952px,#6d6d6d 980px,#686868 1008px,#626262 1036px,#5d5d5d 1063px)"></div>
<div class="s" style="top:322px;height:7px;background:linear-gradient(90deg,#7e7e7e 0px,#838383 28px,#878787 56px,#8c8c8c 84px,#919191 112px,#959595 140px,#9a9a9a 168px,#9f9f9f 196px,#a3a3a3 224px,#a8a8a8 252px,#adadad 280px,#b1b1b1 308px,#b6b6b6 336px,#bababa 364px,#bebebe 392px,#c2c2c2 420px,#c5c5c5 448px,#c6c6c6 476px,#c6c6c6 504px,#c4c4c4 532px,#c0c0c0 560px,#bbbbbb 588px,#b6b6b6 616px,#b1b1b1 644px,#ababab 672px,#a6a6a6 700px,#a0a0a0 728px,#9a9a9a 756px,#959595 784px,#8f8f8f 812px,#898989 840px,#848484 868px,#7e7e7e 896px,#797979 924px,#737373 952px,#6d6d6d 980px,#686868 1008px,#626262 1036px,#5d5d5d 1063px)"></div>
<div class="s" style="top:329px;height:7px;background:linear-gradient(90deg,#7e7e7e 0px,#838383 28px,#888888 56px,#8c8c8c 84px,#919191 112px,#969696 140px,#9a9a9a 168px,#9f9f9f 196px,#a4a4a4 224px,#a8a8a8 252px,#adadad 280px,#b1b1b1 308px,#b6b6b6 336px,#bababa 364px,#bebebe 392px,#c2c2c2 420px,#c5c5c5 448px,#c7c7c7 476px,#c7c7c7 504px,#c4c4c4 532px,#c1c1c1 560px,#bcbcbc 588px,#b7b7b7 616px,#b1b1b1 644px,#acacac 672px,#a6a6a6 700px,#a0a0a0 728px,#9b9b9b 756px,#959595 784px,#8f8f8f 812px,#8a8a8a 840px,#848484 868px,#7e7e7e 896px,#797979 924px,#737373 952px,#6d6d6d 980px,#686868 1008px,#626262 1036px,#5d5d5d 1063px)"></div>
<div class="s" style="top:336px;height:7px;background:linear-gradient(90deg,#7e7e7e 0px,#838383 28px,#888888 56px,#8c8c8c 84px,#919191 112px,#969696 140px,#9a9a9a 168px,#9f9f9f 196px,#a4a4a4 224px,#a8a8a8 252px,#adadad 280px,#b2b2b2 308px,#b6b6b6 336px,#bbbbbb 364px,#bfbfbf 392px,#c3c3c3 420px,#c6c6c6 448px,#c8c8c8 476px,#c8c8c8 504px,#c5c5c5 532px,#c1c1c1 560px,#bcbcbc 588px,#b7b7b7 616px,#b1b1b1 644px,#acacac 672px,#a6a6a6 700px,#a0a0a0 728px,#9b9b9b 756px,#959595 784px,#8f8f8f 812px,#8a8a8a 840px,#848484 868px,#7e7e7e 896px,#797979 924px,#737373 952px,#6e6e6e 980px,#686868 1008px,#626262 1036px,#5d5d5d 1063px)"></div>
<div class="s" style="top:343px;height:7px;background:linear-gradient(90deg,#7e7e7e 0px,#838383 28px,#888888 56px,#8c8c8c 84px,#919191 112px,#969696 140px,#9b9b9b 168px,#9f9f9f 196px,#a4a4a4 224px,#a9a9a9 252px,#adadad 280px,#b2b2b2 308px,#b7b7b7 336px,#bbbbbb 364px,#bfbfbf 392px,#c3c3c3 420px,#c6c6c6 448px,#c8c8c8 476px,#c8c8c8 504px,#c6c6c6 532px,#c1c1c1 560px,#bdbdbd 588px,#b7b7b7 616px,#b2b2b2 644px,#acacac 672px,#a6a6a6 700px,#a1a1a1 728px,#9b9b9b 756px,#959595 784px,#8f8f8f 812px,#8a8a8a 840px,#848484 868px,#7e7e7e 896px,#797979 924px,#737373 952px,#6e6e6e 980px,#686868 1008px,#626262 1036px,#5d5d5d 1063px)"></div>
<div class="s" style="top:350px;height:7px;background:linear-gradient(90deg,#7f7f7f 0px,#838383 28px,#888888 56px,#8d8d8d 84px,#919191 112px,#969696 140px,#9b9b9b 168px,#9f9f9f 196px,#a4a4a4 224px,#a9a9a9 252px,#aeaeae 280px,#b2b2b2 308px,#b7b7b7 336px,#bbbbbb 364px,#c0c0c0 392px,#c4c4c4 420px,#c7c7c7 448px,#c9c9c9 476px,#c9c9c9 504px,#c6c6c6 532px,#c2c2c2 560px,#bdbdbd 588px,#b7b7b7 616px,#b2b2b2 644px,#acacac 672px,#a6a6a6 700px,#a1a1a1 728px,#9b9b9b 756px,#959595 784px,#909090 812px,#8a8a8a 840px,#848484 868px,#7f7f7f 896px,#797979 924px,#737373 952px,#6e6e6e 980px,#686868 1008px,#626262 1036px,#5d5d5d 1063px)"></div>
<div class="s" style="top:357px;height:7px;background:linear-gradient(90deg,#7f7f7f 0px,#838383 28px,#888888 56px,#8d8d8d 84px,#919191 112px,#969696 140px,#9b9b9b 168px,#a0a0a0 196px,#a4a4a4 224px,#a9a9a9 252px,#aeaeae 280px,#b2b2b2 308px,#b7b7b7 336px,#bcbcbc 364px,#c0c0c0 392px,#c4c4c4 420px,#c7c7c7 448px,#cacaca 476px,#c9c9c9 504px,#c7c7c7 532px,#c2c2c2 560px,#bdbdbd 588px,#b8b8b8 616px,#b2b2b2 644px,#acacac 672px,#a7a7a7 700px,#a1a1a1 728px,#9b9b9b 756px,#959595 784px,#909090 812px,#8a8a8a 840px,#848484 868px,#7f7f7f 896px,#797979 924px,#737373 952px,#6e6e6e 980px,#686868 1008px,#636363 1036px,#5d5d5d 1063px)"></div>
<div class="s" style="top:364px;height:7px;background:linear-gradient(90deg,#7f7f7f 0px,#838383 28px,#888888 56px,#8d8d8d 84px,#919191 112px,#969696 140px,#9b9b9b 168px,#a0a0a0 196px,#a4a4a4 224px,#a9a9a9 252px,#aeaeae 280px,#b3b3b3 308px,#b7b7b7 336px,#bcbcbc 364px,#c0c0c0 392px,#c4c4c4 420px,#c8c8c8 448px,#cacaca 476px,#cacaca 504px,#c7c7c7 532px,#c2c2c2 560px,#bdbdbd 588px,#b8b8b8 616px,#b2b2b2 644px,#acacac 672px,#a7a7a7 700px,#a1a1a1 728px,#9b9b9b 756px,#959595 784px,#909090 812px,#8a8a8a 840px,#848484 868px,#7f7f7f 896px,#797979 924px,#737373 952px,#6e6e6e 980px,#686868 1008px,#636363 1036px,#5d5d5d 1063px)"></div>
<div class="s" style="top:371px;height:7px;background:linear-gradient(90deg,#7f7f7f 0px,#838383 28px,#888888 56px,#8d8d8d 84px,#919191 112px,#969696 140px,#9b9b9b 168px,#a0a0a0 196px,#a4a4a4 224px,#a9a9a9 252px,#aeaeae 280px,#b3b3b3 308px,#b7b7b7 336px,#bcbcbc 364px,#c0c0c0 392px,#c4c4c4 420px,#c8c8c8 448px,#cacaca 476px,#cacaca 504px,#c7c7c7 532px,#c3c3c3 560px,#bdbdbd 588px,#b8b8b8 616px,#b2b2b2 644px,#adadad 672px,#a7a7a7 700px,#a1a1a1 728px,#9b9b9b 756px,#959595 784px,#909090 812px,#8a8a8a 840px,#848484 868px,#7f7f7f 896px,#797979 924px,#737373 952px,#6e6e6e 980px,#686868 1008px,#636363 1036px,#5d5d5d 1063px)"></div>
<div class="s" style="top:378px;height:7px;background:linear-gradient(90deg,#7f7f7f 0px,#838383 28px,#888888 56px,#8d8d8d 84px,#919191 112px,#969696 140px,#9b9b9b 168px,#a0a0a0 196px,#a4a4a4 224px,#a9a9a9 252px,#aeaeae 280px,#b3b3b3 308px,#b7b7b7 336px,#bcbcbc 364px,#c0c0c0 392px,#c5c5c5 420px,#c8c8c8 448px,#cbcbcb 476px,#cacaca 504px,#c7c7c7 532px,#c3c3c3 560px,#bebebe 588px,#b8b8b8 616px,#b2b2b2 644px,#adadad 672px,#a7a7a7 700px,#a1a1a1 728px,#9b9b9b 756px,#969696 784px,#909090 812px,#8a8a8a 840px,#848484 868px,#7f7f7f 896px,#797979 924px,#737373 952px,#6e6e6e 980px,#686868 1008px,#636363 1036px,#5d5d5d 1063px)"></div>
<div class="s" style="top:385px;height:7px;background:linear-gradient(90deg,#7f7f7f 0px,#838383 28px,#888888 56px,#8d8d8d 84px,#919191 112px,#969696 140px,#9b9b9b 168px,#a0a0a0 196px,#a4a4a4 224px,#a9a9a9 252px,#aeaeae 280px,#b3b3b3 308px,#b7b7b7 336px,#bcbcbc 364px,#c0c0c0 392px,#c5c5c5 420px,#c8c8c8 448px,#cbcbcb 476px,#cacaca 504px,#c7c7c7 532px,#c3c3c3 560px,#bebebe 588px,#b8b8b8 616px,#b2b2b2 644px,#adadad 672px,#a7a7a7 700px,#a1a1a1 728px,#9b9b9b 756px,#969696 784px,#909090 812px,#8a8a8a 840px,#848484 868px,#7f7f7f 896px,#797979 924px,#737373 952px,#6e6e6e 980px,#686868 1008px,#636363 1036px,#5d5d5d 1063px)"></div>
<div class="s" style="top:392px;height:7px;background:linear-gradient(90deg,#7f7f7f 0px,#838383 28px,#888888 56px,#8d8d8d 84px,#919191 112px,#969696 140px,#9b9b9b 168px,#a0a0a0 196px,#a4a4a4 224px,#a9a9a9 252px,#aeaeae 280px,#b3b3b3 308px,#b7b7b7 336px,#bcbcbc 364px,#c0c0c0 392px,#c5c5c5 420px,#c8c8c8 448px,#cbcbcb 476px,#cacaca 504px,#c7c7c7 532px,#c3c3c3 560px,#bebebe 588px,#b8b8b8 616px,#b2b2b2 644px,#adadad 672px,#a7a7a7 700px,#a1a1a1 728px,#9b9b9b 756px,#969696 784px,#909090 812px,#8a8a8a 840px,#848484 868px,#7f7f7f 896px,#797979 924px,#737373 952px,#6e6e6e 980px,#686868 1008px,#626262 1036px,#5d5d5d 1063px)"></div>
<div class="s" style="top:399px;height:7px;background:linear-gradient(90deg,#7e7e7e 0px,#838383 28px,#888888 56px,#8d8d8d 84px,#919191 112px,#969696 140px,#9b9b9b 168px,#a0a0a0 196px,#a4a4a4 224px,#a9a9a9 252px,#aeaeae 280px,#b3b3b3 308px,#b7b7b7 336px,#bcbcbc 364px,#c0c0c0 392px,#c4c4c4 420px,#c8c8c8 448px,#cacaca 476px,#cacaca 504px,#c7c7c7 532px,#c3c3c3 560px,#bdbdbd 588px,#b8b8b8 616px,#b2b2b2 644px,#adadad 672px,#a7a7a7 700px,#a1a1a1 728px,#9b9b9b 756px,#959595 784px,#909090 812px,#8a8a8a 840px,#848484 868px,#7f7f7f 896px,#797979 924px,#737373 952px,#6e6e6e 980px,#686868 1008px,#626262 1036px,#5d5d5d 1063px)"></div>
<div class="s" style="top:406px;height:7px;background:linear-gradient(90deg,#7e7e7e 0px,#838383 28px,#888888 56px,#8c8c8c 84px,#919191 112px,#969696 140px,#9b9b9b 168px,#9f9f9f 196px,#a4a4a4 224px,#a9a9a9 252px,#aeaeae 280px,#b2b2b2 308px,#b7b7b7 336px,#bcbcbc 364px,#c0c0c0 392px,#c4c4c4 420px,#c8c8c8 448px,#cacaca 476px,#cacaca 504px,#c7c7c7 532px,#c2c2c2 560px,#bdbdbd 588px,#b8b8b8 616px,#b2b2b2 644px,#acacac 672px,#a7a7a7 700px,#a1a1a1 728px,#9b9b9b 756px,#959595 784px,#909090 812px,#8a8a8a 840px,#848484 868px,#7f7f7f 896px,#797979 924px,#737373 952px,#6e6e6e 980px,#686868 1008px,#626262 1036px,#5d5d5d 1063px)"></div>
<div class="s" style="top:413px;height:7px;background:linear-gradient(90deg,#7e7e7e 0px,#838383 28px,#888888 56px,#8c8c8c 84px,#919191 112px,#969696 140px,#9b9b9b 168px,#9f9f9f 196px,#a4a4a4 224px,#a9a9a9 252px,#aeaeae 280px,#b2b2b2 308px,#b7b7b7 336px,#bbbbbb 364px,#c0c0c0 392px,#c4c4c4 420px,#c7c7c7 448px,#c9c9c9 476px,#c9c9c9 504px,#c6c6c6 532px,#c2c2c2 560px,#bdbdbd 588px,#b8b8b8 616px,#b2b2b2 644px,#acacac 672px,#a6a6a6 700px,#a1a1a1 728px,#9b9b9b 756px,#959595 784px,#909090 812px,#8a8a8a 840px,#848484 868px,#7e7e7e 896px,#797979 924px,#737373 952px,#6e6e6e 980px,#686868 1008px,#626262 1036px,#5d5d5d 1063px)"></div>
<div class="s" style="top:420px;height:7px;background:linear-gradient(90deg,#7e7e7e 0px,#838383 28px,#878787 56px,#8c8c8c 84px,#919191 112px,#969696 140px,#9a9a9a 168px,#9f9f9f 196px,#a4a4a4 224px,#a9a9a9 252px,#adadad 280px,#b2b2b2 308px,#b6b6b6 336px,#bbbbbb 364px,#bfbfbf 392px,#c3c3c3 420px,#c7c7c7 448px,#c9c9c9 476px,#c8c8c8 504px,#c6c6c6 532px,#c2c2c2 560px,#bdbdbd 588px,#b7b7b7 616px,#b2b2b2 644px,#acacac 672px,#a6a6a6 700px,#a1a1a1 728px,#9b9b9b 756px,#959595 784px,#8f8f8f 812px,#8a8a8a 840px,#848484 868px,#7e7e7e 896px,#797979 924px,#737373 952px,#6d6d6d 980px,#686868 1008px,#626262 1036px,#5d5d5d 1063px)"></div>
<div class="s" style="top:427px;height:7px;background:linear-gradient(90deg,#7e7e7e 0px,#828282 28px,#878787 56px,#8c8c8c 84px,#919191 112px,#959595 140px,#9a9a9a 168px,#9f9f9f 196px,#a4a4a4 224px,#a8a8a8 252px,#adadad 280px,#b2b2b2 308px,#b6b6b6 336px,#bbbbbb 364px,#bfbfbf 392px,#c3c3c3 420px,#c6c6c6 448px,#c8c8c8 476px,#c7c7c7 504px,#c5c5c5 532px,#c1c1c1 560px,#bcbcbc 588px,#b7b7b7 616px,#b1b1b1 644px,#acacac 672px,#a6a6a6 700px,#a0a0a0 728px,#9b9b9b 756px,#959595 784px,#8f8f8f 812px,#8a8a8a 840px,#848484 868px,#7e7e7e 896px,#797979 924px,#737373 952px,#6d6d6d 980px,#686868 1008px,#626262 1036px,#5d5d5d 1063px)"></div>
<div class="s" style="top:434px;height:7px;background:linear-gradient(90deg,#7e7e7e 0px,#828282 28px,#878787 56px,#8c8c8c 84px,#909090 112px,#959595 140px,#9a9a9a 168px,#9f9f9f 196px,#a3a3a3 224px,#a8a8a8 252px,#adadad 280px,#b1b1b1 308px,#b6b6b6 336px,#bababa 364px,#bebebe 392px,#c2c2c2 420px,#c5c5c5 448px,#c7c7c7 476px,#c7c7c7 504px,#c4c4c4 532px,#c0c0c0 560px,#bcbcbc 588px,#b6b6b6 616px,#b1b1b1 644px,#ababab 672px,#a6a6a6 700px,#a0a0a0 728px,#9a9a9a 756px,#959595 784px,#8f8f8f 812px,#898989 840px,#848484 868px,#7e7e7e 896px,#787878 924px,#737373 952px,#6d6d6d 980px,#686868 1008px,#626262 1036px,#5d5d5d 1063px)"></div>
<div class="s" style="top:441px;height:7px;background:linear-gradient(90deg,#7d7d7d 0px,#828282 28px,#878787 56px,#8b8b8b 84px,#909090 112px,#959595 140px,#999999 168px,#9e9e9e 196px,#a3a3a3 224px,#a8a8a8 252px,#acacac 280px,#b1b1b1 308px,#b5b5b5 336px,#b9b9b9 364px,#bdbdbd 392px,#c1c1c1 420px,#c4c4c4 448px,#c6c6c6 476px,#c6c6c6 504px,#c3c3c3 532px,#c0c0c0 560px,#bbbbbb 588px,#b6b6b6 616px,#b1b1b1 644px,#ababab 672px,#a5a5a5 700px,#a0a0a0 728px,#9a9a9a 756px,#959595 784px,#8f8f8f 812px,#898989 840px,#848484 868px,#7e7e7e 896px,#787878 924px,#737373 952px,#6d6d6d 980px,#676767 1008px,#626262 1036px,#5c5c5c 1063px)"></div>
<div class="s" style="top:448px;height:7px;background:linear-gradient(90deg,#7d7d7d 0px,#828282 28px,#868686 56px,#8b8b8b 84px,#909090 112px,#949494 140px,#999999 168px,#9e9e9e 196px,#a2a2a2 224px,#a7a7a7 252px,#acacac 280px,#b0b0b0 308px,#b5b5b5 336px,#b9b9b9 364px,#bdbdbd 392px,#c0c0c0 420px,#c3c3c3 448px,#c5c5c5 476px,#c4c4c4 504px,#c2c2c2 532px,#bfbfbf 560px,#bababa 588px,#b5b5b5 616px,#b0b0b0 644px,#ababab 672px,#a5a5a5 700px,#a0a0a0 728px,#9a9a9a 756px,#949494 784px,#8f8f8f 812px,#898989 840px,#838383 868px,#7e7e7e 896px,#787878 924px,#727272 952px,#6d6d6d 980px,#676767 1008px,#626262 1036px,#5c5c5c 1063px)"></div>
<div class="s" style="top:455px;height:7px;background:linear-gradient(90deg,#7d7d7d 0px,#818181 28px,#868686 56px,#8b8b8b 84px,#8f8f8f 112px,#949494 140px,#999999 168px,#9d9d9d 196px,#a2a2a2 224px,#a7a7a7 252px,#ababab 280px,#b0b0b0 308px,#b4b4b4 336px,#b8b8b8 364px,#bcbcbc 392px,#bfbfbf 420px,#c2c2c2 448px,#c3c3c3 476px,#c3c3c3 504px,#c1c1c1 532px,#bebebe 560px,#bababa 588px,#b5b5b5 616px,#b0b0b0 644px,#aaaaaa 672px,#a5a5a5 700px,#9f9f9f 728px,#9a9a9a 756px,#949494 784px,#8e8e8e 812px,#898989 840px,#838383 868px,#7d7d7d 896px,#787878 924px,#727272 952px,#6d6d6d 980px,#676767 1008px,#626262 1036px,#5c5c5c 1063px)"></div>
<div class="s" style="top:462px;height:7px;background:linear-gradient(90deg,#7c7c7c 0px,#818181 28px,#868686 56px,#8a8a8a 84px,#8f8f8f 112px,#949494 140px,#989898 168px,#9d9d9d 196px,#a2a2a2 224px,#a6a6a6 252px,#ababab 280px,#afafaf 308px,#b3b3b3 336px,#b7b7b7 364px,#bbbbbb 392px,#bebebe 420px,#c1c1c1 448px,#c2c2c2 476px,#c2c2c2 504px,#c0c0c0 532px,#bdbdbd 560px,#b9b9b9 588px,#b4b4b4 616px,#afafaf 644px,#aaaaaa 672px,#a4a4a4 700px,#9f9f9f 728px,#999999 756px,#949494 784px,#8e8e8e 812px,#888888 840px,#838383 868px,#7d7d7d 896px,#787878 924px,#727272 952px,#6c6c6c 980px,#676767 1008px,#616161 1036px,#5c5c5c 1063px)"></div>
<div class="s" style="top:469px;height:7px;background:linear-gradient(90deg,#7c7c7c 0px,#808080 28px,#858585 56px,#8a8a8a 84px,#8e8e8e 112px,#939393 140px,#989898 168px,#9c9c9c 196px,#a1a1a1 224px,#a6a6a6 252px,#aaaaaa 280px,#aeaeae 308px,#b2b2b2 336px,#b6b6b6 364px,#bababa 392px,#bdbdbd 420px,#c0c0c0 448px,#c1c1c1 476px,#c1c1c1 504px,#bfbfbf 532px,#bcbcbc 560px,#b8b8b8 588px,#b3b3b3 616px,#aeaeae 644px,#a9a9a9 672px,#a4a4a4 700px,#9e9e9e 728px,#999999 756px,#939393 784px,#8e8e8e 812px,#888888 840px,#838383 868px,#7d7d7d 896px,#777777 924px,#727272 952px,#6c6c6c 980px,#676767 1008px,#616161 1036px,#5c5c5c 1063px)"></div>
<div class="s" style="top:476px;height:7px;background:linear-gradient(90deg,#7b7b7b 0px,#808080 28px,#858585 56px,#898989 84px,#8e8e8e 112px,#939393 140px,#979797 168px,#9c9c9c 196px,#a0a0a0 224px,#a5a5a5 252px,#a9a9a9 280px,#aeaeae 308px,#b2b2b2 336px,#b6b6b6 364px,#b9b9b9 392px,#bcbcbc 420px,#bebebe 448px,#c0c0c0 476px,#c0c0c0 504px,#bebebe 532px,#bbbbbb 560px,#b7b7b7 588px,#b3b3b3 616px,#aeaeae 644px,#a9a9a9 672px,#a3a3a3 700px,#9e9e9e 728px,#989898 756px,#939393 784px,#8d8d8d 812px,#888888 840px,#828282 868px,#7d7d7d 896px,#777777 924px,#727272 952px,#6c6c6c 980px,#666666 1008px,#616161 1036px,#5c5c5c 1063px)"></div>
<div class="s" style="top:483px;height:7px;background:linear-gradient(90deg,#7b7b7b 0px,#808080 28px,#848484 56px,#898989 84px,#8d8d8d 112px,#929292 140px,#979797 168px,#9b9b9b 196px,#a0a0a0 224px,#a4a4a4 252px,#a9a9a9 280px,#adadad 308px,#b1b1b1 336px,#b5b5b5 364px,#b8b8b8 392px,#bbbbbb 420px,#bdbdbd 448px,#bebebe 476px,#bebebe 504px,#bdbdbd 532px,#bababa 560px,#b6b6b6 588px,#b2b2b2 616px,#adadad 644px,#a8a8a8 672px,#a3a3a3 700px,#9d9d9d 728px,#989898 756px,#929292 784px,#8d8d8d 812px,#878787 840px,#828282 868px,#7c7c7c 896px,#777777 924px,#717171 952px,#6c6c6c 980px,#666666 1008px,#616161 1036px,#5b5b5b 1063px)"></div>
<div class="s" style="top:490px;height:7px;background:linear-gradient(90deg,#7a7a7a 0px,#7f7f7f 28px,#848484 56px,#888888 84px,#8d8d8d 112px,#919191 140px,#969696 168px,#9b9b9b 196px,#9f9f9f 224px,#a3a3a3 252px,#a8a8a8 280px,#acacac 308px,#b0b0b0 336px,#b4b4b4 364px,#b7b7b7 392px,#bababa 420px,#bcbcbc 448px,#bdbdbd 476px,#bdbdbd 504px,#bbbbbb 532px,#b9b9b9 560px,#b5b5b5 588px,#b1b1b1 616px,#acacac 644px,#a7a7a7 672px,#a2a2a2 700px,#9d9d9d 728px,#979797 756px,#929292 784px,#8c8c8c 812px,#878787 840px,#818181 868px,#7c7c7c 896px,#767676 924px,#717171 952px,#6b6b6b 980px,#666666 1008px,#606060 1036px,#5b5b5b 1063px)"></div>
<div class="s" style="top:497px;height:7px;background:linear-gradient(90deg,#7a7a7a 0px,#7e7e7e 28px,#838383 56px,#888888 84px,#8c8c8c 112px,#919191 140px,#959595 168px,#9a9a9a 196px,#9e9e9e 224px,#a3a3a3 252px,#a7a7a7 280px,#ababab 308px,#afafaf 336px,#b2b2b2 364px,#b6b6b6 392px,#b8b8b8 420px,#bababa 448px,#bcbcbc 476px,#bbbbbb 504px,#bababa 532px,#b8b8b8 560px,#b4b4b4 588px,#b0b0b0 616px,#ababab 644px,#a6a6a6 672px,#a1a1a1 700px,#9c9c9c 728px,#979797 756px,#919191 784px,#8c8c8c 812px,#878787 840px,#818181 868px,#7c7c7c 896px,#767676 924px,#717171 952px,#6b6b6b 980px,#666666 1008px,#606060 1036px,#5b5b5b 1063px)"></div>
<div class="s" style="top:504px;height:7px;background:linear-gradient(90deg,#797979 0px,#7e7e7e 28px,#828282 56px,#878787 84px,#8c8c8c 112px,#909090 140px,#959595 168px,#999999 196px,#9e9e9e 224px,#a2a2a2 252px,#a6a6a6 280px,#aaaaaa 308px,#aeaeae 336px,#b1b1b1 364px,#b4b4b4 392px,#b7b7b7 420px,#b9b9b9 448px,#bababa 476px,#bababa 504px,#b9b9b9 532px,#b6b6b6 560px,#b3b3b3 588px,#afafaf 616px,#aaaaaa 644px,#a6a6a6 672px,#a1a1a1 700px,#9b9b9b 728px,#969696 756px,#919191 784px,#8b8b8b 812px,#868686 840px,#818181 868px,#7b7b7b 896px,#767676 924px,#707070 952px,#6b6b6b 980px,#656565 1008px,#606060 1036px,#5b5b5b 1063px)"></div>
<div class="s" style="top:511px;height:7px;background:linear-gradient(90deg,#797979 0px,#7d7d7d 28px,#828282 56px,#868686 84px,#8b8b8b 112px,#8f8f8f 140px,#949494 168px,#989898 196px,#9d9d9d 224px,#a1a1a1 252px,#a5a5a5 280px,#a9a9a9 308px,#adadad 336px,#b0b0b0 364px,#b3b3b3 392px,#b6b6b6 420px,#b8b8b8 448px,#b9b9b9 476px,#b9b9b9 504px,#b7b7b7 532px,#b5b5b5 560px,#b2b2b2 588px,#aeaeae 616px,#aaaaaa 644px,#a5a5a5 672px,#a0a0a0 700px,#9b9b9b 728px,#969696 756px,#909090 784px,#8b8b8b 812px,#868686 840px,#808080 868px,#7b7b7b 896px,#757575 924px,#707070 952px,#6a6a6a 980px,#656565 1008px,#5f5f5f 1036px,#5a5a5a 1063px)"></div>
<div class="s" style="top:518px;height:7px;background:linear-gradient(90deg,#787878 0px,#7d7d7d 28px,#818181 56px,#868686 84px,#8a8a8a 112px,#8f8f8f 140px,#939393 168px,#989898 196px,#9c9c9c 224px,#a0a0a0 252px,#a4a4a4 280px,#a8a8a8 308px,#acacac 336px,#afafaf 364px,#b2b2b2 392px,#b4b4b4 420px,#b6b6b6 448px,#b7b7b7 476px,#b7b7b7 504px,#b6b6b6 532px,#b4b4b4 560px,#b1b1b1 588px,#adadad 616px,#a9a9a9 644px,#a4a4a4 672px,#9f9f9f 700px,#9a9a9a 728px,#959595 756px,#909090 784px,#8a8a8a 812px,#858585 840px,#808080 868px,#7a7a7a 896px,#757575 924px,#6f6f6f 952px,#6a6a6a 980px,#656565 1008px,#5f5f5f 1036px,#5a5a5a 1063px)"></div>
<div class="s" style="top:525px;height:7px;background:linear-gradient(90deg,#777777 0px,#7c7c7c 28px,#808080 56px,#858585 84px,#898989 112px,#8e8e8e 140px,#929292 168px,#979797 196px,#9b9b9b 224px,#9f9f9f 252px,#a3a3a3 280px,#a7a7a7 308px,#ababab 336px,#aeaeae 364px,#b1b1b1 392px,#b3b3b3 420px,#b5b5b5 448px,#b6b6b6 476px,#b6b6b6 504px,#b5b5b5 532px,#b2b2b2 560px,#afafaf 588px,#acacac 616px,#a8a8a8 644px,#a3a3a3 672px,#9e9e9e 700px,#999999 728px,#949494 756px,#8f8f8f 784px,#8a8a8a 812px,#858585 840px,#7f7f7f 868px,#7a7a7a 896px,#747474 924px,#6f6f6f 952px,#6a6a6a 980px,#646464 1008px,#5f5f5f 1036px,#5a5a5a 1063px)"></div>
<div class="s" style="top:532px;height:7px;background:linear-gradient(90deg,#777777 0px,#7b7b7b 28px,#808080 56px,#848484 84px,#898989 112px,#8d8d8d 140px,#929292 168px,#969696 196px,#9a9a9a 224px,#9e9e9e 252px,#a2a2a2 280px,#a6a6a6 308px,#a9a9a9 336px,#adadad 364px,#afafaf 392px,#b2b2b2 420px,#b3b3b3 448px,#b4b4b4 476px,#b4b4b4 504px,#b3b3b3 532px,#b1b1b1 560px,#aeaeae 588px,#ababab 616px,#a7a7a7 644px,#a2a2a2 672px,#9d9d9d 700px,#999999 728px,#949494 756px,#8e8e8e 784px,#898989 812px,#848484 840px,#7f7f7f 868px,#797979 896px,#747474 924px,#6f6f6f 952px,#696969 980px,#646464 1008px,#5e5e5e 1036px,#595959 1063px)"></div>
<div class="s" style="top:539px;height:7px;background:linear-gradient(90deg,#767676 0px,#7a7a7a 28px,#7f7f7f 56px,#838383 84px,#888888 112px,#8c8c8c 140px,#919191 168px,#959595 196px,#999999 224px,#9d9d9d 252px,#a1a1a1 280px,#a5a5a5 308px,#a8a8a8 336px,#ababab 364px,#aeaeae 392px,#b0b0b0 420px,#b2b2b2 448px,#b3b3b3 476px,#b3b3b3 504px,#b2b2b2 532px,#b0b0b0 560px,#adadad 588px,#a9a9a9 616px,#a5a5a5 644px,#a1a1a1 672px,#9d9d9d 700px,#989898 728px,#939393 756px,#8e8e8e 784px,#898989 812px,#838383 840px,#7e7e7e 868px,#797979 896px,#737373 924px,#6e6e6e 952px,#696969 980px,#636363 1008px,#5e5e5e 1036px,#595959 1063px)"></div>
<div class="s" style="top:546px;height:7px;background:linear-gradient(90deg,#757575 0px,#7a7a7a 28px,#7e7e7e 56px,#838383 84px,#878787 112px,#8b8b8b 140px,#909090 168px,#949494 196px,#989898 224px,#9c9c9c 252px,#a0a0a0 280px,#a4a4a4 308px,#a7a7a7 336px,#aaaaaa 364px,#adadad 392px,#afafaf 420px,#b0b0b0 448px,#b1b1b1 476px,#b1b1b1 504px,#b0b0b0 532px,#aeaeae 560px,#acacac 588px,#a8a8a8 616px,#a4a4a4 644px,#a0a0a0 672px,#9c9c9c 700px,#979797 728px,#929292 756px,#8d8d8d 784px,#888888 812px,#838383 840px,#7e7e7e 868px,#787878 896px,#737373 924px,#6e6e6e 952px,#686868 980px,#636363 1008px,#5e5e5e 1036px,#585858 1063px)"></div>
<div class="s" style="top:553px;height:7px;background:linear-gradient(90deg,#747474 0px,#797979 28px,#7d7d7d 56px,#828282 84px,#868686 112px,#8a8a8a 140px,#8f8f8f 168px,#939393 196px,#979797 224px,#9b9b9b 252px,#9f9f9f 280px,#a2a2a2 308px,#a6a6a6 336px,#a9a9a9 364px,#ababab 392px,#adadad 420px,#afafaf 448px,#b0b0b0 476px,#b0b0b0 504px,#afafaf 532px,#adadad 560px,#aaaaaa 588px,#a7a7a7 616px,#a3a3a3 644px,#9f9f9f 672px,#9b9b9b 700px,#969696 728px,#919191 756px,#8c8c8c 784px,#878787 812px,#828282 840px,#7d7d7d 868px,#787878 896px,#727272 924px,#6d6d6d 952px,#686868 980px,#636363 1008px,#5d5d5d 1036px,#585858 1063px)"></div>
<div class="s" style="top:560px;height:7px;background:linear-gradient(90deg,#737373 0px,#787878 28px,#7c7c7c 56px,#818181 84px,#858585 112px,#8a8a8a 140px,#8e8e8e 168px,#929292 196px,#969696 224px,#9a9a9a 252px,#9e9e9e 280px,#a1a1a1 308px,#a4a4a4 336px,#a7a7a7 364px,#aaaaaa 392px,#acacac 420px,#adadad 448px,#aeaeae 476px,#aeaeae 504px,#adadad 532px,#ababab 560px,#a9a9a9 588px,#a6a6a6 616px,#a2a2a2 644px,#9e9e9e 672px,#9a9a9a 700px,#959595 728px,#909090 756px,#8b8b8b 784px,#868686 812px,#818181 840px,#7c7c7c 868px,#777777 896px,#727272 924px,#6d6d6d 952px,#676767 980px,#626262 1008px,#5d5d5d 1036px,#585858 1063px)"></div>
<div class="s" style="top:567px;height:7px;background:linear-gradient(90deg,#737373 0px,#777777 28px,#7c7c7c 56px,#808080 84px,#848484 112px,#898989 140px,#8d8d8d 168px,#919191 196px,#959595 224px,#999999 252px,#9c9c9c 280px,#a0a0a0 308px,#a3a3a3 336px,#a6a6a6 364px,#a8a8a8 392px,#aaaaaa 420px,#acacac 448px,#acacac 476px,#acacac 504px,#acacac 532px,#aaaaaa 560px,#a8a8a8 588px,#a5a5a5 616px,#a1a1a1 644px,#9d9d9d 672px,#999999 700px,#949494 728px,#909090 756px,#8b8b8b 784px,#868686 812px,#818181 840px,#7c7c7c 868px,#767676 896px,#717171 924px,#6c6c6c 952px,#676767 980px,#626262 1008px,#5c5c5c 1036px,#575757 1063px)"></div>
<div class="s" style="top:574px;height:7px;background:linear-gradient(90deg,#727272 0px,#767676 28px,#7b7b7b 56px,#7f7f7f 84px,#838383 112px,#888888 140px,#8c8c8c 168px,#909090 196px,#949494 224px,#989898 252px,#9b9b9b 280px,#9f9f9f 308px,#a2a2a2 336px,#a4a4a4 364px,#a7a7a7 392px,#a9a9a9 420px,#aaaaaa 448px,#ababab 476px,#ababab 504px,#aaaaaa 532px,#a9a9a9 560px,#a6a6a6 588px,#a3a3a3 616px,#a0a0a0 644px,#9c9c9c 672px,#989898 700px,#939393 728px,#8f8f8f 756px,#8a8a8a 784px,#858585 812px,#808080 840px,#7b7b7b 868px,#767676 896px,#717171 924px,#6c6c6c 952px,#666666 980px,#616161 1008px,#5c5c5c 1036px,#575757 1063px)"></div>
<div class="s" style="top:581px;height:7px;background:linear-gradient(90deg,#717171 0px,#757575 28px,#7a7a7a 56px,#7e7e7e 84px,#828282 112px,#878787 140px,#8b8b8b 168px,#8f8f8f 196px,#939393 224px,#969696 252px,#9a9a9a 280px,#9d9d9d 308px,#a0a0a0 336px,#a3a3a3 364px,#a5a5a5 392px,#a7a7a7 420px,#a9a9a9 448px,#a9a9a9 476px,#a9a9a9 504px,#a9a9a9 532px,#a7a7a7 560px,#a5a5a5 588px,#a2a2a2 616px,#9f9f9f 644px,#9b9b9b 672px,#979797 700px,#929292 728px,#8e8e8e 756px,#898989 784px,#848484 812px,#7f7f7f 840px,#7a7a7a 868px,#757575 896px,#707070 924px,#6b6b6b 952px,#666666 980px,#616161 1008px,#5b5b5b 1036px,#565656 1063px)"></div>
<div class="s" style="top:588px;height:7px;background:linear-gradient(90deg,#707070 0px,#747474 28px,#797979 56px,#7d7d7d 84px,#818181 112px,#858585 140px,#8a8a8a 168px,#8e8e8e 196px,#919191 224px,#959595 252px,#999999 280px,#9c9c9c 308px,#9f9f9f 336px,#a2a2a2 364px,#a4a4a4 392px,#a6a6a6 420px,#a7a7a7 448px,#a8a8a8 476px,#a8a8a8 504px,#a7a7a7 532px,#a6a6a6 560px,#a3a3a3 588px,#a1a1a1 616px,#9d9d9d 644px,#9a9a9a 672px,#969696 700px,#919191 728px,#8d8d8d 756px,#888888 784px,#838383 812px,#7f7f7f 840px,#7a7a7a 868px,#757575 896px,#6f6f6f 924px,#6a6a6a 952px,#656565 980px,#606060 1008px,#5b5b5b 1036px,#565656 1063px)"></div>
<div class="s" style="top:595px;height:7px;background:linear-gradient(90deg,#6f6f6f 0px,#737373 28px,#787878 56px,#7c7c7c 84px,#808080 112px,#848484 140px,#888888 168px,#8c8c8c 196px,#909090 224px,#949494 252px,#979797 280px,#9b9b9b 308px,#9d9d9d 336px,#a0a0a0 364px,#a2a2a2 392px,#a4a4a4 420px,#a5a5a5 448px,#a6a6a6 476px,#a6a6a6 504px,#a6a6a6 532px,#a4a4a4 560px,#a2a2a2 588px,#9f9f9f 616px,#9c9c9c 644px,#989898 672px,#959595 700px,#909090 728px,#8c8c8c 756px,#878787 784px,#838383 812px,#7e7e7e 840px,#797979 868px,#747474 896px,#6f6f6f 924px,#6a6a6a 952px,#656565 980px,#5f5f5f 1008px,#5a5a5a 1036px,#555555 1063px)"></div>
<div class="s" style="top:602px;height:7px;background:linear-gradient(90deg,#6e6e6e 0px,#727272 28px,#777777 56px,#7b7b7b 84px,#7f7f7f 112px,#838383 140px,#878787 168px,#8b8b8b 196px,#8f8f8f 224px,#939393 252px,#969696 280px,#999999 308px,#9c9c9c 336px,#9f9f9f 364px,#a1a1a1 392px,#a3a3a3 420px,#a4a4a4 448px,#a5a5a5 476px,#a5a5a5 504px,#a4a4a4 532px,#a3a3a3 560px,#a1a1a1 588px,#9e9e9e 616px,#9b9b9b 644px,#979797 672px,#939393 700px,#8f8f8f 728px,#8b8b8b 756px,#868686 784px,#828282 812px,#7d7d7d 840px,#787878 868px,#737373 896px,#6e6e6e 924px,#696969 952px,#646464 980px,#5f5f5f 1008px,#5a5a5a 1036px,#555555 1063px)"></div>
<div class="s" style="top:609px;height:7px;background:linear-gradient(90deg,#6d6d6d 0px,#717171 28px,#767676 56px,#7a7a7a 84px,#7e7e7e 112px,#828282 140px,#868686 168px,#8a8a8a 196px,#8e8e8e 224px,#919191 252px,#959595 280px,#989898 308px,#9b9b9b 336px,#9d9d9d 364px,#9f9f9f 392px,#a1a1a1 420px,#a2a2a2 448px,#a3a3a3 476px,#a3a3a3 504px,#a2a2a2 532px,#a1a1a1 560px,#9f9f9f 588px,#9d9d9d 616px,#9a9a9a 644px,#969696 672px,#929292 700px,#8e8e8e 728px,#8a8a8a 756px,#858585 784px,#818181 812px,#7c7c7c 840px,#777777 868px,#727272 896px,#6d6d6d 924px,#686868 952px,#636363 980px,#5e5e5e 1008px,#595959 1036px,#545454 1063px)"></div>
<div class="s" style="top:616px;height:7px;background:linear-gradient(90deg,#6c6c6c 0px,#707070 28px,#747474 56px,#797979 84px,#7d7d7d 112px,#818181 140px,#858585 168px,#898989 196px,#8c8c8c 224px,#909090 252px,#939393 280px,#969696 308px,#999999 336px,#9c9c9c 364px,#9e9e9e 392px,#9f9f9f 420px,#a1a1a1 448px,#a1a1a1 476px,#a1a1a1 504px,#a1a1a1 532px,#a0a0a0 560px,#9e9e9e 588px,#9b9b9b 616px,#989898 644px,#959595 672px,#919191 700px,#8d8d8d 728px,#898989 756px,#858585 784px,#808080 812px,#7b7b7b 840px,#777777 868px,#727272 896px,#6d6d6d 924px,#686868 952px,#636363 980px,#5e5e5e 1008px,#595959 1036px,#545454 1063px)"></div>
<div class="s" style="top:623px;height:7px;background:linear-gradient(90deg,#6b6b6b 0px,#6f6f6f 28px,#737373 56px,#787878 84px,#7c7c7c 112px,#808080 140px,#848484 168px,#878787 196px,#8b8b8b 224px,#8f8f8f 252px,#929292 280px,#959595 308px,#989898 336px,#9a9a9a 364px,#9c9c9c 392px,#9e9e9e 420px,#9f9f9f 448px,#a0a0a0 476px,#a0a0a0 504px,#9f9f9f 532px,#9e9e9e 560px,#9c9c9c 588px,#9a9a9a 616px,#979797 644px,#949494 672px,#909090 700px,#8c8c8c 728px,#888888 756px,#848484 784px,#7f7f7f 812px,#7a7a7a 840px,#767676 868px,#717171 896px,#6c6c6c 924px,#676767 952px,#626262 980px,#5d5d5d 1008px,#585858 1036px,#535353 1063px)"></div>
<div class="s" style="top:630px;height:7px;background:linear-gradient(90deg,#6a6a6a 0px,#6e6e6e 28px,#727272 56px,#767676 84px,#7a7a7a 112px,#7e7e7e 140px,#828282 168px,#868686 196px,#8a8a8a 224px,#8d8d8d 252px,#909090 280px,#939393 308px,#969696 336px,#999999 364px,#9b9b9b 392px,#9c9c9c 420px,#9d9d9d 448px,#9e9e9e 476px,#9e9e9e 504px,#9e9e9e 532px,#9d9d9d 560px,#9b9b9b 588px,#989898 616px,#969696 644px,#929292 672px,#8f8f8f 700px,#8b8b8b 728px,#878787 756px,#838383 784px,#7e7e7e 812px,#7a7a7a 840px,#757575 868px,#707070 896px,#6b6b6b 924px,#666666 952px,#616161 980px,#5c5c5c 1008px,#575757 1036px,#535353 1063px)"></div>
<div class="s" style="top:637px;height:7px;background:linear-gradient(90deg,#686868 0px,#6d6d6d 28px,#717171 56px,#757575 84px,#797979 112px,#7d7d7d 140px,#818181 168px,#858585 196px,#888888 224px,#8c8c8c 252px,#8f8f8f 280px,#929292 308px,#959595 336px,#979797 364px,#999999 392px,#9b9b9b 420px,#9c9c9c 448px,#9c9c9c 476px,#9d9d9d 504px,#9c9c9c 532px,#9b9b9b 560px,#999999 588px,#979797 616px,#949494 644px,#919191 672px,#8e8e8e 700px,#8a8a8a 728px,#868686 756px,#828282 784px,#7d7d7d 812px,#797979 840px,#747474 868px,#6f6f6f 896px,#6b6b6b 924px,#666666 952px,#616161 980px,#5c5c5c 1008px,#575757 1036px,#525252 1063px)"></div>
<div class="s" style="top:644px;height:7px;background:linear-gradient(90deg,#676767 0px,#6c6c6c 28px,#707070 56px,#747474 84px,#787878 112px,#7c7c7c 140px,#808080 168px,#848484 196px,#878787 224px,#8a8a8a 252px,#8e8e8e 280px,#909090 308px,#939393 336px,#959595 364px,#979797 392px,#999999 420px,#9a9a9a 448px,#9b9b9b 476px,#9b9b9b 504px,#9b9b9b 532px,#999999 560px,#989898 588px,#969696 616px,#939393 644px,#909090 672px,#8c8c8c 700px,#898989 728px,#858585 756px,#818181 784px,#7c7c7c 812px,#787878 840px,#737373 868px,#6e6e6e 896px,#6a6a6a 924px,#656565 952px,#606060 980px,#5b5b5b 1008px,#565656 1036px,#515151 1063px)"></div>
<div class="s" style="top:651px;height:7px;background:linear-gradient(90deg,#666666 0px,#6a6a6a 28px,#6f6f6f 56px,#737373 84px,#777777 112px,#7b7b7b 140px,#7e7e7e 168px,#828282 196px,#868686 224px,#898989 252px,#8c8c8c 280px,#8f8f8f 308px,#929292 336px,#949494 364px,#969696 392px,#979797 420px,#989898 448px,#999999 476px,#999999 504px,#999999 532px,#989898 560px,#969696 588px,#949494 616px,#929292 644px,#8e8e8e 672px,#8b8b8b 700px,#878787 728px,#848484 756px,#7f7f7f 784px,#7b7b7b 812px,#777777 840px,#727272 868px,#6e6e6e 896px,#696969 924px,#646464 952px,#5f5f5f 980px,#5a5a5a 1008px,#565656 1036px,#515151 1063px)"></div>
<div class="s" style="top:658px;height:7px;background:linear-gradient(90deg,#656565 0px,#696969 28px,#6d6d6d 56px,#717171 84px,#757575 112px,#797979 140px,#7d7d7d 168px,#818181 196px,#848484 224px,#888888 252px,#8b8b8b 280px,#8d8d8d 308px,#909090 336px,#929292 364px,#949494 392px,#969696 420px,#979797 448px,#979797 476px,#989898 504px,#979797 532px,#969696 560px,#959595 588px,#939393 616px,#909090 644px,#8d8d8d 672px,#8a8a8a 700px,#868686 728px,#828282 756px,#7e7e7e 784px,#7a7a7a 812px,#767676 840px,#717171 868px,#6d6d6d 896px,#686868 924px,#636363 952px,#5f5f5f 980px,#5a5a5a 1008px,#555555 1036px,#505050 1063px)"></div>
<div class="s" style="top:665px;height:7px;background:linear-gradient(90deg,#646464 0px,#686868 28px,#6c6c6c 56px,#707070 84px,#747474 112px,#787878 140px,#7c7c7c 168px,#7f7f7f 196px,#838383 224px,#868686 252px,#898989 280px,#8c8c8c 308px,#8e8e8e 336px,#919191 364px,#929292 392px,#949494 420px,#959595 448px,#969696 476px,#969696 504px,#969696 532px,#959595 560px,#939393 588px,#919191 616px,#8f8f8f 644px,#8c8c8c 672px,#898989 700px,#858585 728px,#818181 756px,#7d7d7d 784px,#797979 812px,#757575 840px,#707070 868px,#6c6c6c 896px,#676767 924px,#636363 952px,#5e5e5e 980px,#595959 1008px,#545454 1036px,#4f4f4f 1063px)"></div>
<div class="s" style="top:672px;height:7px;background:linear-gradient(90deg,#626262 0px,#676767 28px,#6b6b6b 56px,#6f6f6f 84px,#737373 112px,#777777 140px,#7a7a7a 168px,#7e7e7e 196px,#818181 224px,#858585 252px,#888888 280px,#8a8a8a 308px,#8d8d8d 336px,#8f8f8f 364px,#919191 392px,#929292 420px,#939393 448px,#949494 476px,#949494 504px,#949494 532px,#939393 560px,#929292 588px,#909090 616px,#8d8d8d 644px,#8a8a8a 672px,#878787 700px,#848484 728px,#808080 756px,#7c7c7c 784px,#787878 812px,#747474 840px,#707070 868px,#6b6b6b 896px,#666666 924px,#626262 952px,#5d5d5d 980px,#585858 1008px,#535353 1036px,#4f4f4f 1063px)"></div>
<div class="s" style="top:679px;height:7px;background:linear-gradient(90deg,#616161 0px,#656565 28px,#696969 56px,#6d6d6d 84px,#717171 112px,#757575 140px,#797979 168px,#7c7c7c 196px,#808080 224px,#838383 252px,#868686 280px,#898989 308px,#8b8b8b 336px,#8d8d8d 364px,#8f8f8f 392px,#919191 420px,#929292 448px,#929292 476px,#939393 504px,#929292 532px,#929292 560px,#909090 588px,#8e8e8e 616px,#8c8c8c 644px,#898989 672px,#868686 700px,#838383 728px,#7f7f7f 756px,#7b7b7b 784px,#777777 812px,#737373 840px,#6f6f6f 868px,#6a6a6a 896px,#666666 924px,#616161 952px,#5c5c5c 980px,#585858 1008px,#535353 1036px,#4e4e4e 1063px)"></div>
<div class="s" style="top:686px;height:7px;background:linear-gradient(90deg,#606060 0px,#646464 28px,#686868 56px,#6c6c6c 84px,#707070 112px,#747474 140px,#777777 168px,#7b7b7b 196px,#7e7e7e 224px,#828282 252px,#848484 280px,#878787 308px,#8a8a8a 336px,#8c8c8c 364px,#8d8d8d 392px,#8f8f8f 420px,#909090 448px,#919191 476px,#919191 504px,#919191 532px,#909090 560px,#8f8f8f 588px,#8d8d8d 616px,#8a8a8a 644px,#888888 672px,#858585 700px,#818181 728px,#7e7e7e 756px,#7a7a7a 784px,#767676 812px,#727272 840px,#6e6e6e 868px,#696969 896px,#656565 924px,#606060 952px,#5c5c5c 980px,#575757 1008px,#525252 1036px,#4d4d4d 1063px)"></div>
<div class="s" style="top:693px;height:7px;background:linear-gradient(90deg,#5e5e5e 0px,#636363 28px,#676767 56px,#6b6b6b 84px,#6f6f6f 112px,#727272 140px,#767676 168px,#7a7a7a 196px,#7d7d7d 224px,#808080 252px,#838383 280px,#868686 308px,#888888 336px,#8a8a8a 364px,#8c8c8c 392px,#8d8d8d 420px,#8e8e8e 448px,#8f8f8f 476px,#8f8f8f 504px,#8f8f8f 532px,#8e8e8e 560px,#8d8d8d 588px,#8b8b8b 616px,#898989 644px,#868686 672px,#838383 700px,#808080 728px,#7d7d7d 756px,#797979 784px,#757575 812px,#717171 840px,#6d6d6d 868px,#686868 896px,#646464 924px,#5f5f5f 952px,#5b5b5b 980px,#565656 1008px,#515151 1036px,#4d4d4d 1063px)"></div>
<div class="s" style="top:700px;height:7px;background:linear-gradient(90deg,#5d5d5d 0px,#616161 28px,#656565 56px,#696969 84px,#6d6d6d 112px,#717171 140px,#757575 168px,#787878 196px,#7b7b7b 224px,#7e7e7e 252px,#818181 280px,#848484 308px,#868686 336px,#888888 364px,#8a8a8a 392px,#8c8c8c 420px,#8d8d8d 448px,#8d8d8d 476px,#8e8e8e 504px,#8d8d8d 532px,#8d8d8d 560px,#8b8b8b 588px,#8a8a8a 616px,#878787 644px,#858585 672px,#828282 700px,#7f7f7f 728px,#7b7b7b 756px,#787878 784px,#747474 812px,#707070 840px,#6c6c6c 868px,#676767 896px,#636363 924px,#5e5e5e 952px,#5a5a5a 980px,#555555 1008px,#515151 1036px,#4c4c4c 1063px)"></div>
<div class="s" style="top:707px;height:7px;background:linear-gradient(90deg,#5c5c5c 0px,#606060 28px,#646464 56px,#686868 84px,#6c6c6c 112px,#6f6f6f 140px,#737373 168px,#767676 196px,#7a7a7a 224px,#7d7d7d 252px,#808080 280px,#828282 308px,#858585 336px,#878787 364px,#888888 392px,#8a8a8a 420px,#8b8b8b 448px,#8c8c8c 476px,#8c8c8c 504px,#8c8c8c 532px,#8b8b8b 560px,#8a8a8a 588px,#888888 616px,#868686 644px,#838383 672px,#818181 700px,#7e7e7e 728px,#7a7a7a 756px,#777777 784px,#737373 812px,#6f6f6f 840px,#6b6b6b 868px,#666666 896px,#626262 924px,#5e5e5e 952px,#595959 980px,#545454 1008px,#505050 1036px,#4b4b4b 1063px)"></div>
</div>
<div id="imgT" class="abs"></div>
<div id="imgR" class="abs"></div>
<div id="below" class="abs"></div>
<div id="sepline" class="abs"></div>
<div id="bottom" class="abs"></div>
<div class="t " id="nb" style="left:8.98px;top:10.29px;font-size:11px;color:#a8a8a8;transform:scaleX(1.0871);transform-origin:0 0;">N&amp;B</div>
<div class="t mono" id="fname" style="left:873.69px;top:34.20px;font-size:10.4px;color:#b4b4b4;transform:scaleX(1.0057);transform-origin:0 0;">pp_M51270522_flats_stacked.fit</div>
<div class="t mono" id="zoom" style="left:-0.84px;top:906.50px;font-size:10.4px;color:#9a9a9a;transform:scaleX(1.0743);transform-origin:0 0;">19%</div>
<div class="t mono" id="fwhm" style="left:44.2px;top:906.50px;font-size:10.4px;color:#9a9a9a;transform:scaleX(1.0033);transform-origin:0 0;">fwhm : N/A</div>
<div class="t mono" id="xy" style="left:893.5px;top:906.50px;font-size:10.4px;color:#9a9a9a;transform:scaleX(1.0033);transform-origin:0 0;">x: 4908 y: 0010 (=0.022757)</div>
<div class="t " id="seq" style="left:-7.0px;top:925.47px;font-size:11.5px;color:#b0b0b0;transform:scaleX(0.7984);transform-origin:0 0;font-weight:bold;font-style:italic">Séquence :</div>
<div class="t " id="seqv" style="left:42.94px;top:925.47px;font-size:11.5px;color:#a8a8a8;transform:scaleX(0.8795);transform-origin:0 0;">pp_M51270522_flats_, 21/21 images sélectionnées</div>
<div class="cb" style="left:-7px;top:965px"></div>
<div class="t " id="tronq" style="left:10.8px;top:965.87px;font-size:11.5px;color:#a8a8a8;transform:scaleX(0.9614);transform-origin:0 0;">tronquer</div>
<div class="track" style="left:71px;top:954.5px;width:730px"></div>
<div class="track" style="left:71px;top:954.5px;width:14px;background:#2a63b0"></div>
<div class="knob" style="left:83px;top:947.5px"></div>
<div class="track" style="left:71px;top:985px;width:730px"></div>
<div class="knob" style="left:73.5px;top:978px"></div>
<div class="t " id="v1920" style="left:819.24px;top:950.77px;font-size:11.5px;color:#dcdcdc;transform:scaleX(0.8776);transform-origin:0 0;">1920</div>
<div class="t " id="v977" style="left:819.46px;top:981.67px;font-size:11.5px;color:#dcdcdc;transform:scaleX(0.8822);transform-origin:0 0;">977</div>
<div class="radio" style="left:863px;top:943px;background:#fff;border:4px solid #3a78d8"></div>
<div class="radio" style="left:863px;top:962px"></div>
<div class="radio" style="left:863px;top:980.5px"></div>
<div class="t " id="r1" style="left:880.04px;top:945.07px;font-size:11.5px;color:#a0a0a0;transform:scaleX(1.0094);transform-origin:0 0;">Min/Max</div>
<div class="t " id="r2" style="left:880.12px;top:964.07px;font-size:11.5px;color:#a0a0a0;transform:scaleX(0.9129);transform-origin:0 0;">MIPS-LO/HI</div>
<div class="t " id="r3" style="left:880.1px;top:982.37px;font-size:11.5px;color:#a0a0a0;transform:scaleX(0.9294);transform-origin:0 0;">Utilisateur</div>
<div class="abs" style="left:946px;top:954px;width:64px;height:33px;border:1px solid #242424;border-radius:4px;background:#363636"></div>
<div class="t " id="lin" style="left:951.92px;top:965.57px;font-size:11.5px;color:#b8b8b8;transform:scaleX(0.9082);transform-origin:0 0;">Linéaire</div>
<svg class="abs" style="left:991px;top:968px" width="10" height="6" viewBox="0 0 10 6"><path d="M0 0.3H9.4L4.7 5.2Z" fill="#b4b4b4"/></svg>
<div class="abs" style="left:1016px;top:957px;width:15px;height:29px;background:#3b3b3b;border-radius:3px 0 0 3px"></div>
<div class="abs" style="left:1031px;top:957px;width:14px;height:29px;background:#fff;border-radius:0 4px 4px 0"></div>
<svg class="abs" style="left:1031px;top:957px" width="14" height="29" viewBox="0 0 14 29"><path d="M0 5.5 C2 6.5 2.2 8.5 2.6 10.3 C3.2 11.6 5.4 11.2 7.8 11.6 C9.8 12 9.6 13.6 8.4 14.8 C7.2 16 6 16.8 6 18 C6 19.4 7.4 21.2 6.2 22.6 C4.8 24 2.6 22.4 0 21.2" fill="none" stroke="#2a2a2a" stroke-width="2" stroke-linecap="round" stroke-linejoin="round"/></svg>
<div class="abs" style="left:1059px;top:955px;width:4px;height:31px;background:#253047"></div>
<div id="dlg" class="abs">
<div id="dlgtitle" class="abs"></div>
<svg class="abs" style="left:6.8px;top:5.8px" width="14" height="14" viewBox="0 0 14 14"><defs><clipPath id="ic"><circle cx="7" cy="7" r="6.9"/></clipPath></defs><g clip-path="url(#ic)"><rect width="14" height="14" fill="#17244f"/><rect y="5.6" width="14" height="2.4" fill="#5a4a98"/><rect y="7.7" width="14" height="7" fill="#f6f6fa"/><circle cx="3.7" cy="6.5" r="0.9" fill="#e8e4f8"/><circle cx="10" cy="5.9" r="0.9" fill="#cfc8f0"/><path d="M4.6 4.4L5.8 1.8L6.9 4.4" stroke="#6f86c4" stroke-width="0.8" fill="none"/><circle cx="9.6" cy="3" r="0.9" fill="#4a63a8"/></g></svg>
<svg class="abs" style="left:383px;top:8px" width="11" height="11" viewBox="0 0 11 11"><path d="M0.8 0.8L10.2 10.2M10.2 0.8L0.8 10.2" stroke="#fff" stroke-width="1.3" fill="none"/></svg>
<div class="cb" style="left:10px;top:35px"></div>
<div id="tbl" class="abs"><div id="thead" class="abs"></div>
<div class="vs" style="left:89px"></div><div class="vs" style="left:179px"></div><div class="vs" style="left:268px"></div>
<div class="row" style="top:22px;height:21px;background:#1b1b1b"></div>
<div class="row" style="top:43px;height:20px;background:#36354a"></div>
<div class="row" style="top:63px;height:21px;background:#1b1b1b"></div>
<div class="row" style="top:84px;height:21px;background:#36354a"></div>
<div class="row" style="top:105px;height:20px;background:#1b1b1b"></div>
<div class="row" style="top:125px;height:21px;background:#36354a"></div>
<div class="row" style="top:146px;height:20px;background:#1b1b1b"></div>
<div class="row" style="top:166px;height:21px;background:#36354a"></div>
</div>
<div class="btn" style="left:237px;top:314px;width:77px"></div>
<div class="btn" style="left:319px;top:314px;width:77px"></div>
<div class="abs" style="left:321px;top:316px;width:73px;height:26px;border:1px dotted #747474;border-radius:3px"></div>
</div>
<div class="t " id="dtitle" style="left:678.67px;top:505.34px;font-size:12px;color:#ffffff;transform:scaleX(0.8653);transform-origin:0 0;">Statistiques</div>
<div class="t " id="reels" style="left:679.94px;top:534.87px;font-size:11.5px;color:#dcdcdc;transform:scaleX(0.8857);transform-origin:0 0;">Réels normalisés [0, 1]</div>
<div class="t " id="dfname" style="left:780.03px;top:553.67px;font-size:11.5px;color:#dcdcdc;transform:scaleX(0.8886);transform-origin:0 0;">pp_M51270522_flats_stacked.fit</div>
<div class="t " id="aucune" style="left:813.0px;top:570.27px;font-size:11.5px;color:#dcdcdc;transform:scaleX(0.9310);transform-origin:0 0;">Aucune sélection</div>
<div class="t " id="hR" style="left:754.01px;top:590.67px;font-size:11.5px;color:#8c8c8c;transform:scaleX(0.9151);transform-origin:0 0;font-weight:bold">Rouge</div>
<div class="t " id="hV" style="left:844.3px;top:590.67px;font-size:11.5px;color:#8c8c8c;transform:scaleX(0.9195);transform-origin:0 0;font-weight:bold">Vert</div>
<div class="t " id="hB" style="left:933.24px;top:590.67px;font-size:11.5px;color:#8c8c8c;transform:scaleX(0.8809);transform-origin:0 0;font-weight:bold">Bleu</div>
<div class="t " id="ra0" style="left:663.2px;top:613.67px;font-size:11.5px;color:#eeeeee;transform:scaleX(0.9384);transform-origin:0 0;">moyenne</div>
<div class="t " id="rb0" style="left:752.84px;top:613.67px;font-size:11.5px;color:#eeeeee;transform:scaleX(0.8782);transform-origin:0 0;">1511.9</div>
<div class="t " id="rc0" style="left:842.21px;top:613.67px;font-size:11.5px;color:#eeeeee;transform:scaleX(1.1852);transform-origin:0 0;">--</div>
<div class="t " id="rd0" style="left:931.39px;top:613.67px;font-size:11.5px;color:#eeeeee;transform:scaleX(1.2148);transform-origin:0 0;">--</div>
<div class="t " id="ra1" style="left:663.2px;top:634.27px;font-size:11.5px;color:#eeeeee;transform:scaleX(0.9302);transform-origin:0 0;">médiane</div>
<div class="t " id="rb1" style="left:752.86px;top:634.27px;font-size:11.5px;color:#eeeeee;transform:scaleX(0.8588);transform-origin:0 0;">1548.8</div>
<div class="t " id="rc1" style="left:842.21px;top:634.27px;font-size:11.5px;color:#eeeeee;transform:scaleX(1.1852);transform-origin:0 0;">--</div>
<div class="t " id="rd1" style="left:931.39px;top:634.27px;font-size:11.5px;color:#eeeeee;transform:scaleX(1.2148);transform-origin:0 0;">--</div>
<div class="t " id="ra2" style="left:663.38px;top:654.87px;font-size:11.5px;color:#eeeeee;transform:scaleX(0.8918);transform-origin:0 0;">sigma</div>
<div class="t " id="rb2" style="left:752.97px;top:654.87px;font-size:11.5px;color:#eeeeee;transform:scaleX(0.8396);transform-origin:0 0;">182.6</div>
<div class="t " id="rc2" style="left:842.21px;top:654.87px;font-size:11.5px;color:#eeeeee;transform:scaleX(1.1852);transform-origin:0 0;">--</div>
<div class="t " id="rd2" style="left:931.39px;top:654.87px;font-size:11.5px;color:#eeeeee;transform:scaleX(1.2148);transform-origin:0 0;">--</div>
<div class="t " id="ra3" style="left:663.15px;top:675.47px;font-size:11.5px;color:#eeeeee;transform:scaleX(0.9013);transform-origin:0 0;">avgDev</div>
<div class="t " id="rb3" style="left:752.97px;top:675.47px;font-size:11.5px;color:#eeeeee;transform:scaleX(0.8396);transform-origin:0 0;">147.5</div>
<div class="t " id="rc3" style="left:842.21px;top:675.47px;font-size:11.5px;color:#eeeeee;transform:scaleX(1.1852);transform-origin:0 0;">--</div>
<div class="t " id="rd3" style="left:931.39px;top:675.47px;font-size:11.5px;color:#eeeeee;transform:scaleX(1.2148);transform-origin:0 0;">--</div>
<div class="t " id="ra4" style="left:662.97px;top:696.07px;font-size:11.5px;color:#eeeeee;transform:scaleX(0.9773);transform-origin:0 0;">MAD</div>
<div class="t " id="rb4" style="left:752.95px;top:696.07px;font-size:11.5px;color:#eeeeee;transform:scaleX(0.8710);transform-origin:0 0;">119.6</div>
<div class="t " id="rc4" style="left:842.21px;top:696.07px;font-size:11.5px;color:#eeeeee;transform:scaleX(1.1852);transform-origin:0 0;">--</div>
<div class="t " id="rd4" style="left:931.39px;top:696.07px;font-size:11.5px;color:#eeeeee;transform:scaleX(1.2148);transform-origin:0 0;">--</div>
<div class="t " id="ra5" style="left:663.37px;top:716.67px;font-size:11.5px;color:#eeeeee;transform:scaleX(0.9215);transform-origin:0 0;">sqrt(BWMV)</div>
<div class="t " id="rb5" style="left:752.96px;top:716.67px;font-size:11.5px;color:#eeeeee;transform:scaleX(0.8473);transform-origin:0 0;">189.9</div>
<div class="t " id="rc5" style="left:842.21px;top:716.67px;font-size:11.5px;color:#eeeeee;transform:scaleX(1.1852);transform-origin:0 0;">--</div>
<div class="t " id="rd5" style="left:931.39px;top:716.67px;font-size:11.5px;color:#eeeeee;transform:scaleX(1.2148);transform-origin:0 0;">--</div>
<div class="t " id="ra6" style="left:662.93px;top:737.27px;font-size:11.5px;color:#eeeeee;transform:scaleX(1.0203);transform-origin:0 0;">min</div>
<div class="t " id="rb6" style="left:752.78px;top:737.27px;font-size:11.5px;color:#eeeeee;transform:scaleX(0.8393);transform-origin:0 0;">977.5</div>
<div class="t " id="rc6" style="left:842.21px;top:737.27px;font-size:11.5px;color:#eeeeee;transform:scaleX(1.1852);transform-origin:0 0;">--</div>
<div class="t " id="rd6" style="left:931.39px;top:737.27px;font-size:11.5px;color:#eeeeee;transform:scaleX(1.2148);transform-origin:0 0;">--</div>
<div class="t " id="ra7" style="left:663.03px;top:757.87px;font-size:11.5px;color:#eeeeee;transform:scaleX(0.8905);transform-origin:0 0;">max</div>
<div class="t " id="rb7" style="left:752.97px;top:757.87px;font-size:11.5px;color:#eeeeee;transform:scaleX(0.8412);transform-origin:0 0;">1919.9</div>
<div class="t " id="rc7" style="left:842.21px;top:757.87px;font-size:11.5px;color:#eeeeee;transform:scaleX(1.1852);transform-origin:0 0;">--</div>
<div class="t " id="rd7" style="left:931.39px;top:757.87px;font-size:11.5px;color:#eeeeee;transform:scaleX(1.2148);transform-origin:0 0;">--</div>
<div class="t " id="exe" style="left:907.72px;top:820.17px;font-size:11.5px;color:#dcdcdc;transform:scaleX(0.9101);transform-origin:0 0;">Exécuter</div>
<div class="t " id="fer" style="left:992.94px;top:820.17px;font-size:11.5px;color:#dcdcdc;transform:scaleX(0.8800);transform-origin:0 0;">Fermer</div>
</body>
</html>
